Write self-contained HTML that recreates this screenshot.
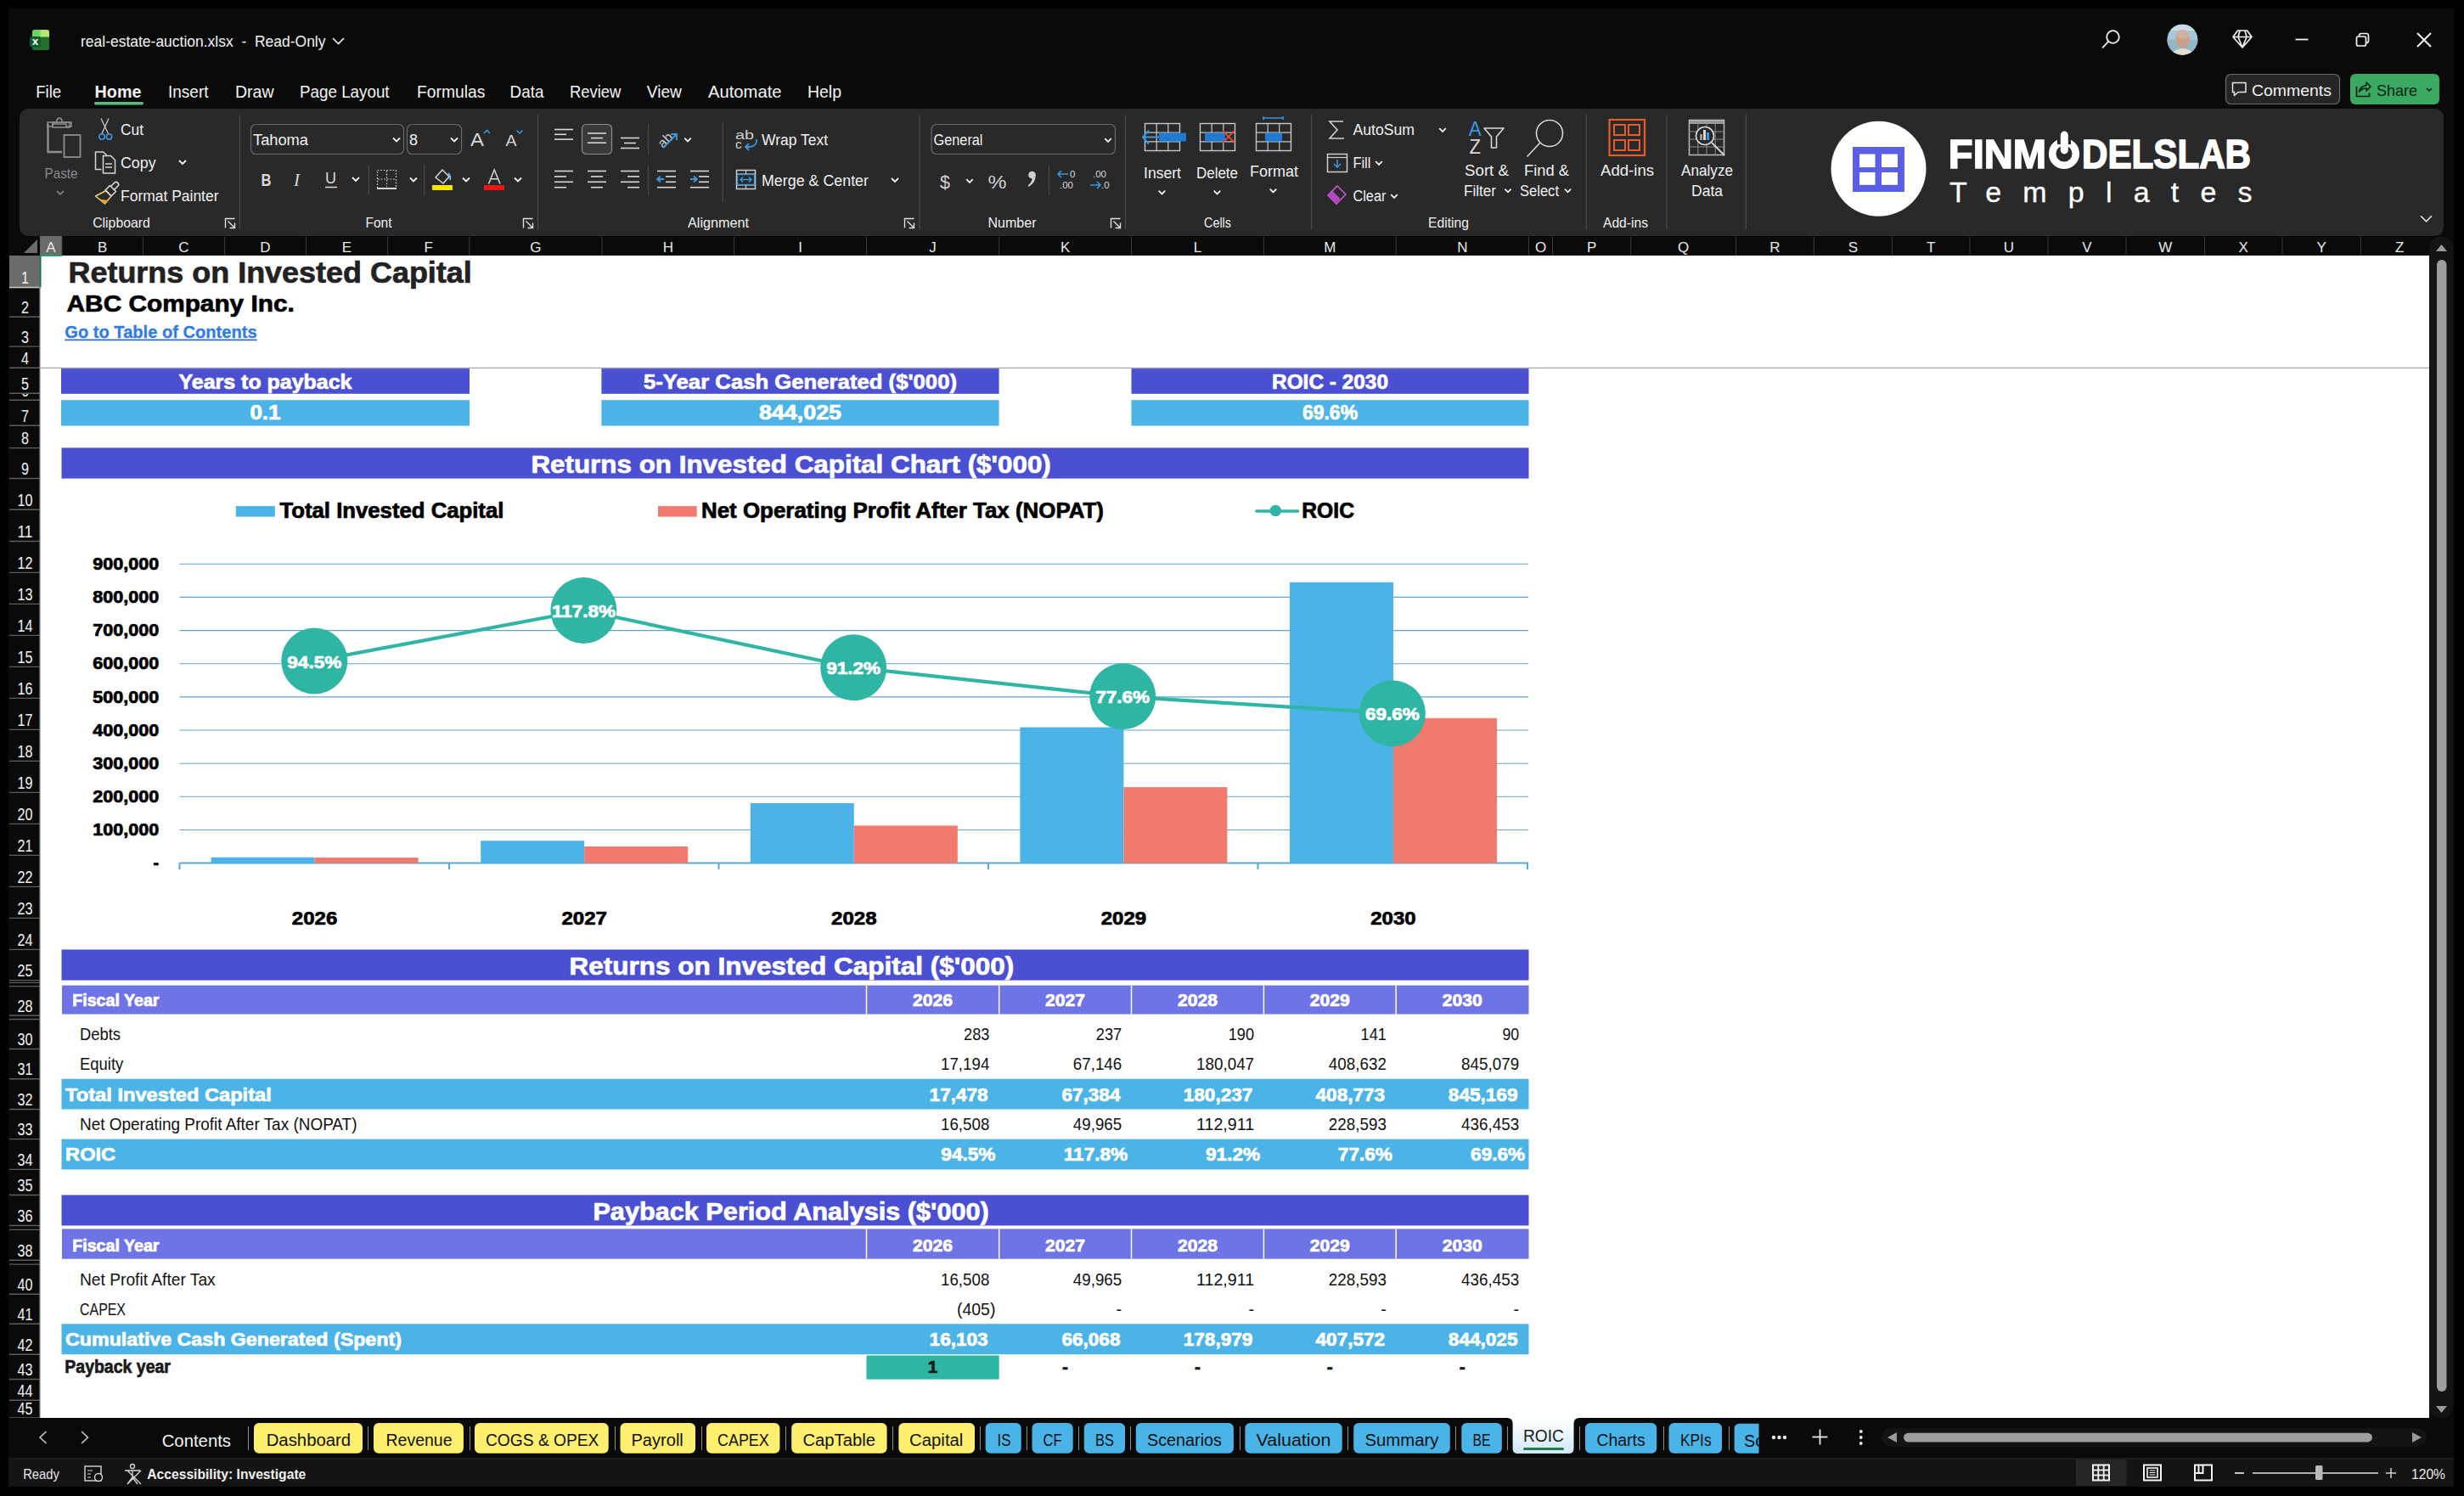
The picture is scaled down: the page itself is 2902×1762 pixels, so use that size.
<!DOCTYPE html>
<html><head><meta charset="utf-8"><title>real-estate-auction.xlsx - Excel</title>
<style>
html,body{margin:0;padding:0;background:#000;width:2902px;height:1762px;overflow:hidden;}
svg{display:block;font-family:"Liberation Sans", sans-serif;}
</style></head><body>
<svg width="2902" height="1762" viewBox="0 0 2902 1762">

<rect x="0.0" y="0.0" width="2902.0" height="1762.0" fill="#000"/>
<rect x="10.0" y="10.0" width="2880.0" height="1741.0" fill="#0a0a0a"/>
<rect x="47.0" y="301.0" width="2814.0" height="1369.0" fill="#ffffff"/>
<rect x="11.0" y="278.0" width="2850.0" height="23.0" fill="#0a0a0a"/>
<rect x="47.0" y="278.0" width="26.0" height="23.0" fill="#6b6b6b"/>
<text x="60.0" y="296.5" font-size="17" fill="#e8e8e8" text-anchor="middle">A</text>
<line x1="168.4" y1="279.0" x2="168.4" y2="301.0" stroke="#3c3c3c" stroke-width="1"/>
<text x="120.7" y="296.5" font-size="17" fill="#e8e8e8" text-anchor="middle">B</text>
<line x1="264.6" y1="279.0" x2="264.6" y2="301.0" stroke="#3c3c3c" stroke-width="1"/>
<text x="216.5" y="296.5" font-size="17" fill="#e8e8e8" text-anchor="middle">C</text>
<line x1="360.4" y1="279.0" x2="360.4" y2="301.0" stroke="#3c3c3c" stroke-width="1"/>
<text x="312.5" y="296.5" font-size="17" fill="#e8e8e8" text-anchor="middle">D</text>
<line x1="456.6" y1="279.0" x2="456.6" y2="301.0" stroke="#3c3c3c" stroke-width="1"/>
<text x="408.5" y="296.5" font-size="17" fill="#e8e8e8" text-anchor="middle">E</text>
<line x1="552.8" y1="279.0" x2="552.8" y2="301.0" stroke="#3c3c3c" stroke-width="1"/>
<text x="504.7" y="296.5" font-size="17" fill="#e8e8e8" text-anchor="middle">F</text>
<line x1="709.0" y1="279.0" x2="709.0" y2="301.0" stroke="#3c3c3c" stroke-width="1"/>
<text x="630.9" y="296.5" font-size="17" fill="#e8e8e8" text-anchor="middle">G</text>
<line x1="864.6" y1="279.0" x2="864.6" y2="301.0" stroke="#3c3c3c" stroke-width="1"/>
<text x="786.8" y="296.5" font-size="17" fill="#e8e8e8" text-anchor="middle">H</text>
<line x1="1020.5" y1="279.0" x2="1020.5" y2="301.0" stroke="#3c3c3c" stroke-width="1"/>
<text x="942.5" y="296.5" font-size="17" fill="#e8e8e8" text-anchor="middle">I</text>
<line x1="1176.7" y1="279.0" x2="1176.7" y2="301.0" stroke="#3c3c3c" stroke-width="1"/>
<text x="1098.6" y="296.5" font-size="17" fill="#e8e8e8" text-anchor="middle">J</text>
<line x1="1332.5" y1="279.0" x2="1332.5" y2="301.0" stroke="#3c3c3c" stroke-width="1"/>
<text x="1254.6" y="296.5" font-size="17" fill="#e8e8e8" text-anchor="middle">K</text>
<line x1="1488.4" y1="279.0" x2="1488.4" y2="301.0" stroke="#3c3c3c" stroke-width="1"/>
<text x="1410.5" y="296.5" font-size="17" fill="#e8e8e8" text-anchor="middle">L</text>
<line x1="1644.2" y1="279.0" x2="1644.2" y2="301.0" stroke="#3c3c3c" stroke-width="1"/>
<text x="1566.3" y="296.5" font-size="17" fill="#e8e8e8" text-anchor="middle">M</text>
<line x1="1800.5" y1="279.0" x2="1800.5" y2="301.0" stroke="#3c3c3c" stroke-width="1"/>
<text x="1722.3" y="296.5" font-size="17" fill="#e8e8e8" text-anchor="middle">N</text>
<line x1="1828.5" y1="279.0" x2="1828.5" y2="301.0" stroke="#3c3c3c" stroke-width="1"/>
<text x="1814.5" y="296.5" font-size="17" fill="#e8e8e8" text-anchor="middle">O</text>
<line x1="1920.7" y1="279.0" x2="1920.7" y2="301.0" stroke="#3c3c3c" stroke-width="1"/>
<text x="1874.6" y="296.5" font-size="17" fill="#e8e8e8" text-anchor="middle">P</text>
<line x1="2044.6" y1="279.0" x2="2044.6" y2="301.0" stroke="#3c3c3c" stroke-width="1"/>
<text x="1982.7" y="296.5" font-size="17" fill="#e8e8e8" text-anchor="middle">Q</text>
<line x1="2136.3" y1="279.0" x2="2136.3" y2="301.0" stroke="#3c3c3c" stroke-width="1"/>
<text x="2090.4" y="296.5" font-size="17" fill="#e8e8e8" text-anchor="middle">R</text>
<line x1="2228.4" y1="279.0" x2="2228.4" y2="301.0" stroke="#3c3c3c" stroke-width="1"/>
<text x="2182.4" y="296.5" font-size="17" fill="#e8e8e8" text-anchor="middle">S</text>
<line x1="2320.0" y1="279.0" x2="2320.0" y2="301.0" stroke="#3c3c3c" stroke-width="1"/>
<text x="2274.2" y="296.5" font-size="17" fill="#e8e8e8" text-anchor="middle">T</text>
<line x1="2412.0" y1="279.0" x2="2412.0" y2="301.0" stroke="#3c3c3c" stroke-width="1"/>
<text x="2366.0" y="296.5" font-size="17" fill="#e8e8e8" text-anchor="middle">U</text>
<line x1="2504.0" y1="279.0" x2="2504.0" y2="301.0" stroke="#3c3c3c" stroke-width="1"/>
<text x="2458.0" y="296.5" font-size="17" fill="#e8e8e8" text-anchor="middle">V</text>
<line x1="2596.5" y1="279.0" x2="2596.5" y2="301.0" stroke="#3c3c3c" stroke-width="1"/>
<text x="2550.2" y="296.5" font-size="17" fill="#e8e8e8" text-anchor="middle">W</text>
<line x1="2688.0" y1="279.0" x2="2688.0" y2="301.0" stroke="#3c3c3c" stroke-width="1"/>
<text x="2642.2" y="296.5" font-size="17" fill="#e8e8e8" text-anchor="middle">X</text>
<line x1="2780.3" y1="279.0" x2="2780.3" y2="301.0" stroke="#3c3c3c" stroke-width="1"/>
<text x="2734.2" y="296.5" font-size="17" fill="#e8e8e8" text-anchor="middle">Y</text>
<text x="2826.2" y="296.5" font-size="17" fill="#e8e8e8" text-anchor="middle">Z</text>
<line x1="73.0" y1="279.0" x2="73.0" y2="301.0" stroke="#3c3c3c" stroke-width="1"/>
<polygon points="44,282 44,298 28,298" fill="#6b6b6b"/>
<rect x="11.0" y="301.0" width="36.0" height="1369.0" fill="#0a0a0a"/>
<rect x="11.0" y="301.0" width="36.0" height="37.5" fill="#6b6b6b"/>
<line x1="11.0" y1="338.5" x2="47.0" y2="338.5" stroke="#5e5e5e" stroke-width="1.4"/>
<line x1="11.0" y1="373.3" x2="47.0" y2="373.3" stroke="#5e5e5e" stroke-width="1.4"/>
<line x1="11.0" y1="408.1" x2="47.0" y2="408.1" stroke="#5e5e5e" stroke-width="1.4"/>
<line x1="11.0" y1="433.3" x2="47.0" y2="433.3" stroke="#5e5e5e" stroke-width="1.4"/>
<line x1="11.0" y1="463.2" x2="47.0" y2="463.2" stroke="#5e5e5e" stroke-width="1.4"/>
<line x1="11.0" y1="471.2" x2="47.0" y2="471.2" stroke="#5e5e5e" stroke-width="1.4"/>
<line x1="11.0" y1="501.3" x2="47.0" y2="501.3" stroke="#5e5e5e" stroke-width="1.4"/>
<line x1="11.0" y1="527.6" x2="47.0" y2="527.6" stroke="#5e5e5e" stroke-width="1.4"/>
<line x1="11.0" y1="563.5" x2="47.0" y2="563.5" stroke="#5e5e5e" stroke-width="1.4"/>
<line x1="11.0" y1="600.3" x2="47.0" y2="600.3" stroke="#5e5e5e" stroke-width="1.4"/>
<line x1="11.0" y1="637.5" x2="47.0" y2="637.5" stroke="#5e5e5e" stroke-width="1.4"/>
<line x1="11.0" y1="674.4" x2="47.0" y2="674.4" stroke="#5e5e5e" stroke-width="1.4"/>
<line x1="11.0" y1="711.4" x2="47.0" y2="711.4" stroke="#5e5e5e" stroke-width="1.4"/>
<line x1="11.0" y1="748.4" x2="47.0" y2="748.4" stroke="#5e5e5e" stroke-width="1.4"/>
<line x1="11.0" y1="785.4" x2="47.0" y2="785.4" stroke="#5e5e5e" stroke-width="1.4"/>
<line x1="11.0" y1="822.4" x2="47.0" y2="822.4" stroke="#5e5e5e" stroke-width="1.4"/>
<line x1="11.0" y1="859.4" x2="47.0" y2="859.4" stroke="#5e5e5e" stroke-width="1.4"/>
<line x1="11.0" y1="896.4" x2="47.0" y2="896.4" stroke="#5e5e5e" stroke-width="1.4"/>
<line x1="11.0" y1="933.4" x2="47.0" y2="933.4" stroke="#5e5e5e" stroke-width="1.4"/>
<line x1="11.0" y1="970.4" x2="47.0" y2="970.4" stroke="#5e5e5e" stroke-width="1.4"/>
<line x1="11.0" y1="1007.4" x2="47.0" y2="1007.4" stroke="#5e5e5e" stroke-width="1.4"/>
<line x1="11.0" y1="1044.4" x2="47.0" y2="1044.4" stroke="#5e5e5e" stroke-width="1.4"/>
<line x1="11.0" y1="1081.4" x2="47.0" y2="1081.4" stroke="#5e5e5e" stroke-width="1.4"/>
<line x1="11.0" y1="1118.4" x2="47.0" y2="1118.4" stroke="#5e5e5e" stroke-width="1.4"/>
<line x1="11.0" y1="1154.6" x2="47.0" y2="1154.6" stroke="#5e5e5e" stroke-width="1.4"/>
<line x1="11.0" y1="1157.4" x2="47.0" y2="1157.4" stroke="#5e5e5e" stroke-width="1.4"/>
<line x1="11.0" y1="1161.6" x2="47.0" y2="1161.6" stroke="#5e5e5e" stroke-width="1.4"/>
<line x1="11.0" y1="1196.0" x2="47.0" y2="1196.0" stroke="#5e5e5e" stroke-width="1.4"/>
<line x1="11.0" y1="1200.5" x2="47.0" y2="1200.5" stroke="#5e5e5e" stroke-width="1.4"/>
<line x1="11.0" y1="1235.5" x2="47.0" y2="1235.5" stroke="#5e5e5e" stroke-width="1.4"/>
<line x1="11.0" y1="1270.7" x2="47.0" y2="1270.7" stroke="#5e5e5e" stroke-width="1.4"/>
<line x1="11.0" y1="1306.5" x2="47.0" y2="1306.5" stroke="#5e5e5e" stroke-width="1.4"/>
<line x1="11.0" y1="1341.6" x2="47.0" y2="1341.6" stroke="#5e5e5e" stroke-width="1.4"/>
<line x1="11.0" y1="1377.4" x2="47.0" y2="1377.4" stroke="#5e5e5e" stroke-width="1.4"/>
<line x1="11.0" y1="1407.5" x2="47.0" y2="1407.5" stroke="#5e5e5e" stroke-width="1.4"/>
<line x1="11.0" y1="1443.5" x2="47.0" y2="1443.5" stroke="#5e5e5e" stroke-width="1.4"/>
<line x1="11.0" y1="1448.4" x2="47.0" y2="1448.4" stroke="#5e5e5e" stroke-width="1.4"/>
<line x1="11.0" y1="1484.2" x2="47.0" y2="1484.2" stroke="#5e5e5e" stroke-width="1.4"/>
<line x1="11.0" y1="1489.1" x2="47.0" y2="1489.1" stroke="#5e5e5e" stroke-width="1.4"/>
<line x1="11.0" y1="1524.2" x2="47.0" y2="1524.2" stroke="#5e5e5e" stroke-width="1.4"/>
<line x1="11.0" y1="1559.3" x2="47.0" y2="1559.3" stroke="#5e5e5e" stroke-width="1.4"/>
<line x1="11.0" y1="1595.2" x2="47.0" y2="1595.2" stroke="#5e5e5e" stroke-width="1.4"/>
<line x1="11.0" y1="1624.5" x2="47.0" y2="1624.5" stroke="#5e5e5e" stroke-width="1.4"/>
<line x1="11.0" y1="1649.3" x2="47.0" y2="1649.3" stroke="#5e5e5e" stroke-width="1.4"/>
<line x1="11.0" y1="1670.0" x2="47.0" y2="1670.0" stroke="#5e5e5e" stroke-width="1.4"/>
<line x1="11.0" y1="338.5" x2="47.0" y2="338.5" stroke="#c8c8c8" stroke-width="1.6"/>
<text x="29.5" y="334.1" font-size="19.5" fill="#f2f2f2" text-anchor="middle" textLength="9.0" lengthAdjust="spacingAndGlyphs">1</text>
<text x="29.5" y="368.9" font-size="19.5" fill="#f2f2f2" text-anchor="middle" textLength="9.0" lengthAdjust="spacingAndGlyphs">2</text>
<text x="29.5" y="403.7" font-size="19.5" fill="#f2f2f2" text-anchor="middle" textLength="9.0" lengthAdjust="spacingAndGlyphs">3</text>
<text x="29.5" y="428.9" font-size="19.5" fill="#f2f2f2" text-anchor="middle" textLength="9.0" lengthAdjust="spacingAndGlyphs">4</text>
<text x="29.5" y="458.8" font-size="19.5" fill="#f2f2f2" text-anchor="middle" textLength="9.0" lengthAdjust="spacingAndGlyphs">5</text>
<text x="29.5" y="496.9" font-size="19.5" fill="#f2f2f2" text-anchor="middle" textLength="9.0" lengthAdjust="spacingAndGlyphs">7</text>
<text x="29.5" y="523.2" font-size="19.5" fill="#f2f2f2" text-anchor="middle" textLength="9.0" lengthAdjust="spacingAndGlyphs">8</text>
<text x="29.5" y="559.1" font-size="19.5" fill="#f2f2f2" text-anchor="middle" textLength="9.0" lengthAdjust="spacingAndGlyphs">9</text>
<text x="29.5" y="595.9" font-size="19.5" fill="#f2f2f2" text-anchor="middle" textLength="18.0" lengthAdjust="spacingAndGlyphs">10</text>
<text x="29.5" y="633.1" font-size="19.5" fill="#f2f2f2" text-anchor="middle" textLength="18.0" lengthAdjust="spacingAndGlyphs">11</text>
<text x="29.5" y="670.0" font-size="19.5" fill="#f2f2f2" text-anchor="middle" textLength="18.0" lengthAdjust="spacingAndGlyphs">12</text>
<text x="29.5" y="707.0" font-size="19.5" fill="#f2f2f2" text-anchor="middle" textLength="18.0" lengthAdjust="spacingAndGlyphs">13</text>
<text x="29.5" y="744.0" font-size="19.5" fill="#f2f2f2" text-anchor="middle" textLength="18.0" lengthAdjust="spacingAndGlyphs">14</text>
<text x="29.5" y="781.0" font-size="19.5" fill="#f2f2f2" text-anchor="middle" textLength="18.0" lengthAdjust="spacingAndGlyphs">15</text>
<text x="29.5" y="818.0" font-size="19.5" fill="#f2f2f2" text-anchor="middle" textLength="18.0" lengthAdjust="spacingAndGlyphs">16</text>
<text x="29.5" y="855.0" font-size="19.5" fill="#f2f2f2" text-anchor="middle" textLength="18.0" lengthAdjust="spacingAndGlyphs">17</text>
<text x="29.5" y="892.0" font-size="19.5" fill="#f2f2f2" text-anchor="middle" textLength="18.0" lengthAdjust="spacingAndGlyphs">18</text>
<text x="29.5" y="929.0" font-size="19.5" fill="#f2f2f2" text-anchor="middle" textLength="18.0" lengthAdjust="spacingAndGlyphs">19</text>
<text x="29.5" y="966.0" font-size="19.5" fill="#f2f2f2" text-anchor="middle" textLength="18.0" lengthAdjust="spacingAndGlyphs">20</text>
<text x="29.5" y="1003.0" font-size="19.5" fill="#f2f2f2" text-anchor="middle" textLength="18.0" lengthAdjust="spacingAndGlyphs">21</text>
<text x="29.5" y="1040.0" font-size="19.5" fill="#f2f2f2" text-anchor="middle" textLength="18.0" lengthAdjust="spacingAndGlyphs">22</text>
<text x="29.5" y="1077.0" font-size="19.5" fill="#f2f2f2" text-anchor="middle" textLength="18.0" lengthAdjust="spacingAndGlyphs">23</text>
<text x="29.5" y="1114.0" font-size="19.5" fill="#f2f2f2" text-anchor="middle" textLength="18.0" lengthAdjust="spacingAndGlyphs">24</text>
<text x="29.5" y="1150.2" font-size="19.5" fill="#f2f2f2" text-anchor="middle" textLength="18.0" lengthAdjust="spacingAndGlyphs">25</text>
<text x="29.5" y="1191.6" font-size="19.5" fill="#f2f2f2" text-anchor="middle" textLength="18.0" lengthAdjust="spacingAndGlyphs">28</text>
<text x="29.5" y="1231.1" font-size="19.5" fill="#f2f2f2" text-anchor="middle" textLength="18.0" lengthAdjust="spacingAndGlyphs">30</text>
<text x="29.5" y="1266.3" font-size="19.5" fill="#f2f2f2" text-anchor="middle" textLength="18.0" lengthAdjust="spacingAndGlyphs">31</text>
<text x="29.5" y="1302.1" font-size="19.5" fill="#f2f2f2" text-anchor="middle" textLength="18.0" lengthAdjust="spacingAndGlyphs">32</text>
<text x="29.5" y="1337.2" font-size="19.5" fill="#f2f2f2" text-anchor="middle" textLength="18.0" lengthAdjust="spacingAndGlyphs">33</text>
<text x="29.5" y="1373.0" font-size="19.5" fill="#f2f2f2" text-anchor="middle" textLength="18.0" lengthAdjust="spacingAndGlyphs">34</text>
<text x="29.5" y="1403.1" font-size="19.5" fill="#f2f2f2" text-anchor="middle" textLength="18.0" lengthAdjust="spacingAndGlyphs">35</text>
<text x="29.5" y="1439.1" font-size="19.5" fill="#f2f2f2" text-anchor="middle" textLength="18.0" lengthAdjust="spacingAndGlyphs">36</text>
<text x="29.5" y="1479.8" font-size="19.5" fill="#f2f2f2" text-anchor="middle" textLength="18.0" lengthAdjust="spacingAndGlyphs">38</text>
<text x="29.5" y="1519.8" font-size="19.5" fill="#f2f2f2" text-anchor="middle" textLength="18.0" lengthAdjust="spacingAndGlyphs">40</text>
<text x="29.5" y="1554.9" font-size="19.5" fill="#f2f2f2" text-anchor="middle" textLength="18.0" lengthAdjust="spacingAndGlyphs">41</text>
<text x="29.5" y="1590.8" font-size="19.5" fill="#f2f2f2" text-anchor="middle" textLength="18.0" lengthAdjust="spacingAndGlyphs">42</text>
<text x="29.5" y="1620.1" font-size="19.5" fill="#f2f2f2" text-anchor="middle" textLength="18.0" lengthAdjust="spacingAndGlyphs">43</text>
<text x="29.5" y="1644.9" font-size="19.5" fill="#f2f2f2" text-anchor="middle" textLength="18.0" lengthAdjust="spacingAndGlyphs">44</text>
<text x="29.5" y="1665.6" font-size="19.5" fill="#f2f2f2" text-anchor="middle" textLength="18.0" lengthAdjust="spacingAndGlyphs">45</text>
<line x1="47.0" y1="301.0" x2="47.0" y2="1670.0" stroke="#8a8a8a" stroke-width="1.2"/>
<clipPath id="r6"><rect x="11" y="464" width="36" height="6.5"/></clipPath>
<g clip-path="url(#r6)">
<text x="29.5" y="466.8" font-size="19.5" fill="#f2f2f2" text-anchor="middle" textLength="9.0" lengthAdjust="spacingAndGlyphs">6</text>
</g>
<line x1="47.0" y1="301.0" x2="73.0" y2="301.0" stroke="#21a366" stroke-width="2"/>
<line x1="47.5" y1="301.0" x2="47.5" y2="338.5" stroke="#1e7145" stroke-width="2"/>
<line x1="47.0" y1="433.4" x2="2861.0" y2="433.4" stroke="#a6a6a6" stroke-width="1.2"/>
<text x="80.5" y="333.3" font-size="34.9" fill="#222222" font-weight="bold" stroke="#222222" stroke-width="0.7" textLength="475.3" lengthAdjust="spacingAndGlyphs">Returns on Invested Capital</text>
<text x="78.6" y="366.8" font-size="27.2" fill="#000000" font-weight="bold" stroke="#000000" stroke-width="0.7" textLength="268.2" lengthAdjust="spacingAndGlyphs">ABC Company Inc.</text>
<text x="76.3" y="398.2" font-size="20.4" fill="#2f7ce6" font-weight="bold" textLength="226.3" lengthAdjust="spacingAndGlyphs" stroke="#2f7ce6" stroke-width="0.3">Go to Table of Contents</text>
<line x1="76.3" y1="400.3" x2="302.6" y2="400.3" stroke="#3a6cc6" stroke-width="1.8"/>
<rect x="72.0" y="434.1" width="481.0" height="29.7" fill="#4b4fd1"/>
<rect x="72.0" y="471.2" width="481.0" height="30.3" fill="#4cb3e6"/>
<text x="312.5" y="457.7" font-size="24.4" fill="#ffffff" font-weight="bold" stroke="#ffffff" stroke-width="0.7" text-anchor="middle" textLength="204.0" lengthAdjust="spacingAndGlyphs">Years to payback</text>
<text x="312.5" y="494.2" font-size="23.0" fill="#ffffff" font-weight="bold" stroke="#ffffff" stroke-width="0.7" text-anchor="middle" textLength="36.2" lengthAdjust="spacingAndGlyphs">0.1</text>
<rect x="708.4" y="434.1" width="468.2" height="29.7" fill="#4b4fd1"/>
<rect x="708.4" y="471.2" width="468.2" height="30.3" fill="#4cb3e6"/>
<text x="942.5" y="457.7" font-size="24.4" fill="#ffffff" font-weight="bold" stroke="#ffffff" stroke-width="0.7" text-anchor="middle" textLength="369.0" lengthAdjust="spacingAndGlyphs">5-Year Cash Generated ($'000)</text>
<text x="942.5" y="494.2" font-size="23.0" fill="#ffffff" font-weight="bold" stroke="#ffffff" stroke-width="0.7" text-anchor="middle" textLength="97.0" lengthAdjust="spacingAndGlyphs">844,025</text>
<rect x="1332.5" y="434.1" width="468.0" height="29.7" fill="#4b4fd1"/>
<rect x="1332.5" y="471.2" width="468.0" height="30.3" fill="#4cb3e6"/>
<text x="1566.5" y="457.7" font-size="24.4" fill="#ffffff" font-weight="bold" stroke="#ffffff" stroke-width="0.7" text-anchor="middle">ROIC - 2030</text>
<text x="1566.5" y="494.2" font-size="23.0" fill="#ffffff" font-weight="bold" stroke="#ffffff" stroke-width="0.7" text-anchor="middle">69.6%</text>
<rect x="72.5" y="527.4" width="1728.0" height="36.2" fill="#4b4fd1"/>
<text x="931.6" y="557.0" font-size="28.6" fill="#ffffff" font-weight="bold" stroke="#ffffff" stroke-width="0.7" text-anchor="middle" textLength="612.4" lengthAdjust="spacingAndGlyphs">Returns on Invested Capital Chart ($'000)</text>
<line x1="211.5" y1="977.5" x2="1800.0" y2="977.5" stroke="#62a2d0" stroke-width="1.1"/>
<text x="187.2" y="984.1" font-size="19.8" fill="#000000" font-weight="bold" stroke="#000000" stroke-width="0.7" text-anchor="end" textLength="77.9" lengthAdjust="spacingAndGlyphs">100,000</text>
<line x1="211.5" y1="938.3" x2="1800.0" y2="938.3" stroke="#62a2d0" stroke-width="1.1"/>
<text x="187.2" y="944.9" font-size="19.8" fill="#000000" font-weight="bold" stroke="#000000" stroke-width="0.7" text-anchor="end" textLength="77.9" lengthAdjust="spacingAndGlyphs">200,000</text>
<line x1="211.5" y1="899.2" x2="1800.0" y2="899.2" stroke="#62a2d0" stroke-width="1.1"/>
<text x="187.2" y="905.8" font-size="19.8" fill="#000000" font-weight="bold" stroke="#000000" stroke-width="0.7" text-anchor="end" textLength="77.9" lengthAdjust="spacingAndGlyphs">300,000</text>
<line x1="211.5" y1="860.0" x2="1800.0" y2="860.0" stroke="#62a2d0" stroke-width="1.1"/>
<text x="187.2" y="866.6" font-size="19.8" fill="#000000" font-weight="bold" stroke="#000000" stroke-width="0.7" text-anchor="end" textLength="77.9" lengthAdjust="spacingAndGlyphs">400,000</text>
<line x1="211.5" y1="820.9" x2="1800.0" y2="820.9" stroke="#62a2d0" stroke-width="1.1"/>
<text x="187.2" y="827.5" font-size="19.8" fill="#000000" font-weight="bold" stroke="#000000" stroke-width="0.7" text-anchor="end" textLength="77.9" lengthAdjust="spacingAndGlyphs">500,000</text>
<line x1="211.5" y1="781.7" x2="1800.0" y2="781.7" stroke="#62a2d0" stroke-width="1.1"/>
<text x="187.2" y="788.3" font-size="19.8" fill="#000000" font-weight="bold" stroke="#000000" stroke-width="0.7" text-anchor="end" textLength="77.9" lengthAdjust="spacingAndGlyphs">600,000</text>
<line x1="211.5" y1="742.6" x2="1800.0" y2="742.6" stroke="#62a2d0" stroke-width="1.1"/>
<text x="187.2" y="749.2" font-size="19.8" fill="#000000" font-weight="bold" stroke="#000000" stroke-width="0.7" text-anchor="end" textLength="77.9" lengthAdjust="spacingAndGlyphs">700,000</text>
<line x1="211.5" y1="703.4" x2="1800.0" y2="703.4" stroke="#62a2d0" stroke-width="1.1"/>
<text x="187.2" y="710.0" font-size="19.8" fill="#000000" font-weight="bold" stroke="#000000" stroke-width="0.7" text-anchor="end" textLength="77.9" lengthAdjust="spacingAndGlyphs">800,000</text>
<line x1="211.5" y1="664.3" x2="1800.0" y2="664.3" stroke="#62a2d0" stroke-width="1.1"/>
<text x="187.2" y="670.9" font-size="19.8" fill="#000000" font-weight="bold" stroke="#000000" stroke-width="0.7" text-anchor="end" textLength="77.9" lengthAdjust="spacingAndGlyphs">900,000</text>
<text x="187.2" y="1023.2" font-size="19.8" fill="#000000" font-weight="bold" stroke="#000000" stroke-width="0.7" text-anchor="end">-</text>
<line x1="211.5" y1="1016.6" x2="1800.0" y2="1016.6" stroke="#5aa9d6" stroke-width="2"/>
<line x1="211.5" y1="1016.6" x2="211.5" y2="1024.0" stroke="#5aa9d6" stroke-width="2"/>
<line x1="529.0" y1="1016.6" x2="529.0" y2="1024.0" stroke="#5aa9d6" stroke-width="2"/>
<line x1="846.5" y1="1016.6" x2="846.5" y2="1024.0" stroke="#5aa9d6" stroke-width="2"/>
<line x1="1164.0" y1="1016.6" x2="1164.0" y2="1024.0" stroke="#5aa9d6" stroke-width="2"/>
<line x1="1481.5" y1="1016.6" x2="1481.5" y2="1024.0" stroke="#5aa9d6" stroke-width="2"/>
<line x1="1799.0" y1="1016.6" x2="1799.0" y2="1024.0" stroke="#5aa9d6" stroke-width="2"/>
<rect x="248.6" y="1009.8" width="122.0" height="6.8" fill="#4cb3e6"/>
<rect x="370.6" y="1010.1" width="122.0" height="6.5" fill="#f07a6e"/>
<text x="370.6" y="1088.8" font-size="22.1" fill="#000000" font-weight="bold" stroke="#000000" stroke-width="0.7" text-anchor="middle" textLength="53.5" lengthAdjust="spacingAndGlyphs">2026</text>
<rect x="566.2" y="990.2" width="122.0" height="26.4" fill="#4cb3e6"/>
<rect x="688.2" y="997.0" width="122.0" height="19.6" fill="#f07a6e"/>
<text x="688.2" y="1088.8" font-size="22.1" fill="#000000" font-weight="bold" stroke="#000000" stroke-width="0.7" text-anchor="middle" textLength="53.5" lengthAdjust="spacingAndGlyphs">2027</text>
<rect x="883.8" y="946.0" width="122.0" height="70.6" fill="#4cb3e6"/>
<rect x="1005.8" y="972.4" width="122.0" height="44.2" fill="#f07a6e"/>
<text x="1005.8" y="1088.8" font-size="22.1" fill="#000000" font-weight="bold" stroke="#000000" stroke-width="0.7" text-anchor="middle" textLength="53.5" lengthAdjust="spacingAndGlyphs">2028</text>
<rect x="1201.4" y="856.6" width="122.0" height="160.0" fill="#4cb3e6"/>
<rect x="1323.4" y="927.1" width="122.0" height="89.5" fill="#f07a6e"/>
<text x="1323.4" y="1088.8" font-size="22.1" fill="#000000" font-weight="bold" stroke="#000000" stroke-width="0.7" text-anchor="middle" textLength="53.5" lengthAdjust="spacingAndGlyphs">2029</text>
<rect x="1519.0" y="685.8" width="122.0" height="330.8" fill="#4cb3e6"/>
<rect x="1641.0" y="845.8" width="122.0" height="170.8" fill="#f07a6e"/>
<text x="1641.0" y="1088.8" font-size="22.1" fill="#000000" font-weight="bold" stroke="#000000" stroke-width="0.7" text-anchor="middle" textLength="53.5" lengthAdjust="spacingAndGlyphs">2030</text>
<polyline points="370.3,778.5 687.4,719.0 1005.2,786.3 1322.2,820.3 1639.9,840.2" fill="none" stroke="#2fb5a4" stroke-width="4.2" stroke-linejoin="round"/>
<circle cx="370.3" cy="778.5" r="39" fill="#2fb5a4"/>
<text x="370.3" y="786.5" font-size="19.8" fill="#ffffff" font-weight="bold" stroke="#ffffff" stroke-width="0.7" text-anchor="middle" textLength="64.0" lengthAdjust="spacingAndGlyphs">94.5%</text>
<circle cx="687.4" cy="719.0" r="39" fill="#2fb5a4"/>
<text x="687.4" y="727.0" font-size="19.8" fill="#ffffff" font-weight="bold" stroke="#ffffff" stroke-width="0.7" text-anchor="middle" textLength="75.0" lengthAdjust="spacingAndGlyphs">117.8%</text>
<circle cx="1005.2" cy="786.3" r="39" fill="#2fb5a4"/>
<text x="1005.2" y="794.3" font-size="19.8" fill="#ffffff" font-weight="bold" stroke="#ffffff" stroke-width="0.7" text-anchor="middle" textLength="64.0" lengthAdjust="spacingAndGlyphs">91.2%</text>
<circle cx="1322.2" cy="820.3" r="39" fill="#2fb5a4"/>
<text x="1322.2" y="828.3" font-size="19.8" fill="#ffffff" font-weight="bold" stroke="#ffffff" stroke-width="0.7" text-anchor="middle" textLength="64.0" lengthAdjust="spacingAndGlyphs">77.6%</text>
<circle cx="1639.9" cy="840.2" r="39" fill="#2fb5a4"/>
<text x="1639.9" y="848.2" font-size="19.8" fill="#ffffff" font-weight="bold" stroke="#ffffff" stroke-width="0.7" text-anchor="middle" textLength="64.0" lengthAdjust="spacingAndGlyphs">69.6%</text>
<rect x="277.8" y="596.1" width="46.0" height="12.5" fill="#4cb3e6"/>
<text x="329.5" y="609.8" font-size="24.9" fill="#000000" font-weight="bold" stroke="#000000" stroke-width="0.7" textLength="263.9" lengthAdjust="spacingAndGlyphs">Total Invested Capital</text>
<rect x="775.0" y="596.1" width="45.7" height="12.5" fill="#f07a6e"/>
<text x="826.0" y="609.8" font-size="24.9" fill="#000000" font-weight="bold" stroke="#000000" stroke-width="0.7" textLength="474.0" lengthAdjust="spacingAndGlyphs">Net Operating Profit After Tax (NOPAT)</text>
<line x1="1480.0" y1="602.0" x2="1528.5" y2="602.0" stroke="#2fb5a4" stroke-width="3.6" stroke-linecap="round"/>
<circle cx="1502.3" cy="601.5" r="6.8" fill="#2fb5a4"/>
<text x="1533.3" y="609.8" font-size="24.9" fill="#000000" font-weight="bold" stroke="#000000" stroke-width="0.7" textLength="61.7" lengthAdjust="spacingAndGlyphs">ROIC</text>
<rect x="72.5" y="1118.4" width="1728.0" height="36.2" fill="#4b4fd1"/>
<text x="932.4" y="1147.8" font-size="28.6" fill="#ffffff" font-weight="bold" stroke="#ffffff" stroke-width="0.7" text-anchor="middle" textLength="523.8" lengthAdjust="spacingAndGlyphs">Returns on Invested Capital ($'000)</text>
<rect x="73.0" y="1160.6" width="1727.5" height="33.9" fill="#6e73e6"/>
<text x="85.2" y="1185.4" font-size="19.8" fill="#ffffff" font-weight="bold" stroke="#ffffff" stroke-width="0.7" textLength="102.3" lengthAdjust="spacingAndGlyphs">Fiscal Year</text>
<line x1="1020.5" y1="1160.6" x2="1020.5" y2="1194.5" stroke="#ffffff" stroke-width="1.5"/>
<text x="1098.6" y="1185.4" font-size="20.4" fill="#ffffff" font-weight="bold" stroke="#ffffff" stroke-width="0.7" text-anchor="middle" textLength="47.0" lengthAdjust="spacingAndGlyphs">2026</text>
<line x1="1176.7" y1="1160.6" x2="1176.7" y2="1194.5" stroke="#ffffff" stroke-width="1.5"/>
<text x="1254.6" y="1185.4" font-size="20.4" fill="#ffffff" font-weight="bold" stroke="#ffffff" stroke-width="0.7" text-anchor="middle" textLength="47.0" lengthAdjust="spacingAndGlyphs">2027</text>
<line x1="1332.5" y1="1160.6" x2="1332.5" y2="1194.5" stroke="#ffffff" stroke-width="1.5"/>
<text x="1410.5" y="1185.4" font-size="20.4" fill="#ffffff" font-weight="bold" stroke="#ffffff" stroke-width="0.7" text-anchor="middle" textLength="47.0" lengthAdjust="spacingAndGlyphs">2028</text>
<line x1="1488.4" y1="1160.6" x2="1488.4" y2="1194.5" stroke="#ffffff" stroke-width="1.5"/>
<text x="1566.3" y="1185.4" font-size="20.4" fill="#ffffff" font-weight="bold" stroke="#ffffff" stroke-width="0.7" text-anchor="middle" textLength="47.0" lengthAdjust="spacingAndGlyphs">2029</text>
<line x1="1644.2" y1="1160.6" x2="1644.2" y2="1194.5" stroke="#ffffff" stroke-width="1.5"/>
<text x="1722.3" y="1185.4" font-size="20.4" fill="#ffffff" font-weight="bold" stroke="#ffffff" stroke-width="0.7" text-anchor="middle" textLength="47.0" lengthAdjust="spacingAndGlyphs">2030</text>
<text x="94.0" y="1225.0" font-size="19.8" fill="#111111" textLength="48.0" lengthAdjust="spacingAndGlyphs">Debts</text>
<text x="1165.4" y="1225.0" font-size="19.8" fill="#111111" text-anchor="end" textLength="30.4" lengthAdjust="spacingAndGlyphs">283</text>
<text x="1321.2" y="1225.0" font-size="19.8" fill="#111111" text-anchor="end" textLength="30.4" lengthAdjust="spacingAndGlyphs">237</text>
<text x="1477.1" y="1225.0" font-size="19.8" fill="#111111" text-anchor="end" textLength="30.4" lengthAdjust="spacingAndGlyphs">190</text>
<text x="1632.9" y="1225.0" font-size="19.8" fill="#111111" text-anchor="end" textLength="30.4" lengthAdjust="spacingAndGlyphs">141</text>
<text x="1789.2" y="1225.0" font-size="19.8" fill="#111111" text-anchor="end" textLength="19.8" lengthAdjust="spacingAndGlyphs">90</text>
<text x="94.0" y="1260.2" font-size="19.8" fill="#111111" textLength="51.3" lengthAdjust="spacingAndGlyphs">Equity</text>
<text x="1165.4" y="1260.2" font-size="19.8" fill="#111111" text-anchor="end" textLength="57.4" lengthAdjust="spacingAndGlyphs">17,194</text>
<text x="1321.2" y="1260.2" font-size="19.8" fill="#111111" text-anchor="end" textLength="57.4" lengthAdjust="spacingAndGlyphs">67,146</text>
<text x="1477.1" y="1260.2" font-size="19.8" fill="#111111" text-anchor="end" textLength="68.1" lengthAdjust="spacingAndGlyphs">180,047</text>
<text x="1632.9" y="1260.2" font-size="19.8" fill="#111111" text-anchor="end" textLength="68.1" lengthAdjust="spacingAndGlyphs">408,632</text>
<text x="1789.2" y="1260.2" font-size="19.8" fill="#111111" text-anchor="end" textLength="68.1" lengthAdjust="spacingAndGlyphs">845,079</text>
<rect x="72.5" y="1270.7" width="1728.0" height="35.8" fill="#4cb3e6"/>
<text x="77.1" y="1296.5" font-size="22.6" fill="#ffffff" font-weight="bold" stroke="#ffffff" stroke-width="0.7" textLength="242.7" lengthAdjust="spacingAndGlyphs">Total Invested Capital</text>
<text x="1163.7" y="1296.5" font-size="22.6" fill="#ffffff" font-weight="bold" stroke="#ffffff" stroke-width="0.7" text-anchor="end">17,478</text>
<text x="1319.5" y="1296.5" font-size="22.6" fill="#ffffff" font-weight="bold" stroke="#ffffff" stroke-width="0.7" text-anchor="end">67,384</text>
<text x="1475.4" y="1296.5" font-size="22.6" fill="#ffffff" font-weight="bold" stroke="#ffffff" stroke-width="0.7" text-anchor="end">180,237</text>
<text x="1631.2" y="1296.5" font-size="22.6" fill="#ffffff" font-weight="bold" stroke="#ffffff" stroke-width="0.7" text-anchor="end">408,773</text>
<text x="1787.5" y="1296.5" font-size="22.6" fill="#ffffff" font-weight="bold" stroke="#ffffff" stroke-width="0.7" text-anchor="end">845,169</text>
<text x="94.0" y="1331.1" font-size="19.8" fill="#111111" textLength="326.5" lengthAdjust="spacingAndGlyphs">Net Operating Profit After Tax (NOPAT)</text>
<text x="1165.4" y="1331.1" font-size="19.8" fill="#111111" text-anchor="end" textLength="57.4" lengthAdjust="spacingAndGlyphs">16,508</text>
<text x="1321.2" y="1331.1" font-size="19.8" fill="#111111" text-anchor="end" textLength="57.4" lengthAdjust="spacingAndGlyphs">49,965</text>
<text x="1477.1" y="1331.1" font-size="19.8" fill="#111111" text-anchor="end" textLength="68.1" lengthAdjust="spacingAndGlyphs">112,911</text>
<text x="1632.9" y="1331.1" font-size="19.8" fill="#111111" text-anchor="end" textLength="68.1" lengthAdjust="spacingAndGlyphs">228,593</text>
<text x="1789.2" y="1331.1" font-size="19.8" fill="#111111" text-anchor="end" textLength="68.1" lengthAdjust="spacingAndGlyphs">436,453</text>
<rect x="72.5" y="1341.6" width="1728.0" height="35.8" fill="#4cb3e6"/>
<text x="77.1" y="1367.4" font-size="22.6" fill="#ffffff" font-weight="bold" stroke="#ffffff" stroke-width="0.7" textLength="59.0" lengthAdjust="spacingAndGlyphs">ROIC</text>
<text x="1172.4" y="1367.4" font-size="22.6" fill="#ffffff" font-weight="bold" stroke="#ffffff" stroke-width="0.7" text-anchor="end">94.5%</text>
<text x="1328.2" y="1367.4" font-size="22.6" fill="#ffffff" font-weight="bold" stroke="#ffffff" stroke-width="0.7" text-anchor="end">117.8%</text>
<text x="1484.1" y="1367.4" font-size="22.6" fill="#ffffff" font-weight="bold" stroke="#ffffff" stroke-width="0.7" text-anchor="end">91.2%</text>
<text x="1639.9" y="1367.4" font-size="22.6" fill="#ffffff" font-weight="bold" stroke="#ffffff" stroke-width="0.7" text-anchor="end">77.6%</text>
<text x="1796.2" y="1367.4" font-size="22.6" fill="#ffffff" font-weight="bold" stroke="#ffffff" stroke-width="0.7" text-anchor="end">69.6%</text>
<rect x="72.5" y="1407.5" width="1728.0" height="36.0" fill="#4b4fd1"/>
<text x="931.6" y="1436.7" font-size="28.6" fill="#ffffff" font-weight="bold" stroke="#ffffff" stroke-width="0.7" text-anchor="middle" textLength="466.4" lengthAdjust="spacingAndGlyphs">Payback Period Analysis ($'000)</text>
<rect x="73.0" y="1447.4" width="1727.5" height="35.3" fill="#6e73e6"/>
<text x="85.2" y="1473.6" font-size="19.8" fill="#ffffff" font-weight="bold" stroke="#ffffff" stroke-width="0.7" textLength="102.3" lengthAdjust="spacingAndGlyphs">Fiscal Year</text>
<line x1="1020.5" y1="1447.4" x2="1020.5" y2="1482.7" stroke="#ffffff" stroke-width="1.5"/>
<text x="1098.6" y="1473.6" font-size="20.4" fill="#ffffff" font-weight="bold" stroke="#ffffff" stroke-width="0.7" text-anchor="middle" textLength="47.0" lengthAdjust="spacingAndGlyphs">2026</text>
<line x1="1176.7" y1="1447.4" x2="1176.7" y2="1482.7" stroke="#ffffff" stroke-width="1.5"/>
<text x="1254.6" y="1473.6" font-size="20.4" fill="#ffffff" font-weight="bold" stroke="#ffffff" stroke-width="0.7" text-anchor="middle" textLength="47.0" lengthAdjust="spacingAndGlyphs">2027</text>
<line x1="1332.5" y1="1447.4" x2="1332.5" y2="1482.7" stroke="#ffffff" stroke-width="1.5"/>
<text x="1410.5" y="1473.6" font-size="20.4" fill="#ffffff" font-weight="bold" stroke="#ffffff" stroke-width="0.7" text-anchor="middle" textLength="47.0" lengthAdjust="spacingAndGlyphs">2028</text>
<line x1="1488.4" y1="1447.4" x2="1488.4" y2="1482.7" stroke="#ffffff" stroke-width="1.5"/>
<text x="1566.3" y="1473.6" font-size="20.4" fill="#ffffff" font-weight="bold" stroke="#ffffff" stroke-width="0.7" text-anchor="middle" textLength="47.0" lengthAdjust="spacingAndGlyphs">2029</text>
<line x1="1644.2" y1="1447.4" x2="1644.2" y2="1482.7" stroke="#ffffff" stroke-width="1.5"/>
<text x="1722.3" y="1473.6" font-size="20.4" fill="#ffffff" font-weight="bold" stroke="#ffffff" stroke-width="0.7" text-anchor="middle" textLength="47.0" lengthAdjust="spacingAndGlyphs">2030</text>
<text x="94.0" y="1513.7" font-size="19.8" fill="#111111" textLength="159.7" lengthAdjust="spacingAndGlyphs">Net Profit After Tax</text>
<text x="1165.4" y="1513.7" font-size="19.8" fill="#111111" text-anchor="end" textLength="57.4" lengthAdjust="spacingAndGlyphs">16,508</text>
<text x="1321.2" y="1513.7" font-size="19.8" fill="#111111" text-anchor="end" textLength="57.4" lengthAdjust="spacingAndGlyphs">49,965</text>
<text x="1477.1" y="1513.7" font-size="19.8" fill="#111111" text-anchor="end" textLength="68.1" lengthAdjust="spacingAndGlyphs">112,911</text>
<text x="1632.9" y="1513.7" font-size="19.8" fill="#111111" text-anchor="end" textLength="68.1" lengthAdjust="spacingAndGlyphs">228,593</text>
<text x="1789.2" y="1513.7" font-size="19.8" fill="#111111" text-anchor="end" textLength="68.1" lengthAdjust="spacingAndGlyphs">436,453</text>
<text x="94.0" y="1549.0" font-size="19.8" fill="#111111" textLength="54.0" lengthAdjust="spacingAndGlyphs">CAPEX</text>
<text x="1172.4" y="1549.0" font-size="19.8" fill="#111111" text-anchor="end" textLength="45.4" lengthAdjust="spacingAndGlyphs">(405)</text>
<text x="1321.2" y="1549.0" font-size="19.8" fill="#111111" text-anchor="end">-</text>
<text x="1477.1" y="1549.0" font-size="19.8" fill="#111111" text-anchor="end">-</text>
<text x="1632.9" y="1549.0" font-size="19.8" fill="#111111" text-anchor="end">-</text>
<text x="1789.2" y="1549.0" font-size="19.8" fill="#111111" text-anchor="end">-</text>
<rect x="72.5" y="1559.3" width="1728.0" height="35.9" fill="#4cb3e6"/>
<text x="77.1" y="1585.2" font-size="22.6" fill="#ffffff" font-weight="bold" stroke="#ffffff" stroke-width="0.7" textLength="395.8" lengthAdjust="spacingAndGlyphs">Cumulative Cash Generated (Spent)</text>
<text x="1163.7" y="1585.2" font-size="22.6" fill="#ffffff" font-weight="bold" stroke="#ffffff" stroke-width="0.7" text-anchor="end">16,103</text>
<text x="1319.5" y="1585.2" font-size="22.6" fill="#ffffff" font-weight="bold" stroke="#ffffff" stroke-width="0.7" text-anchor="end">66,068</text>
<text x="1475.4" y="1585.2" font-size="22.6" fill="#ffffff" font-weight="bold" stroke="#ffffff" stroke-width="0.7" text-anchor="end">178,979</text>
<text x="1631.2" y="1585.2" font-size="22.6" fill="#ffffff" font-weight="bold" stroke="#ffffff" stroke-width="0.7" text-anchor="end">407,572</text>
<text x="1787.5" y="1585.2" font-size="22.6" fill="#ffffff" font-weight="bold" stroke="#ffffff" stroke-width="0.7" text-anchor="end">844,025</text>
<rect x="1020.5" y="1596.5" width="156.2" height="28.1" fill="#2fb5a4"/>
<text x="76.3" y="1617.1" font-size="22.6" fill="#1a1a1a" font-weight="bold" stroke="#1a1a1a" stroke-width="0.7" textLength="124.6" lengthAdjust="spacingAndGlyphs">Payback year</text>
<text x="1098.6" y="1617.3" font-size="20.9" fill="#1a1a1a" font-weight="bold" stroke="#1a1a1a" stroke-width="0.7" text-anchor="middle">1</text>
<text x="1254.6" y="1617.3" font-size="20.9" fill="#1a1a1a" font-weight="bold" stroke="#1a1a1a" stroke-width="0.7" text-anchor="middle">-</text>
<text x="1410.5" y="1617.3" font-size="20.9" fill="#1a1a1a" font-weight="bold" stroke="#1a1a1a" stroke-width="0.7" text-anchor="middle">-</text>
<text x="1566.3" y="1617.3" font-size="20.9" fill="#1a1a1a" font-weight="bold" stroke="#1a1a1a" stroke-width="0.7" text-anchor="middle">-</text>
<text x="1722.3" y="1617.3" font-size="20.9" fill="#1a1a1a" font-weight="bold" stroke="#1a1a1a" stroke-width="0.7" text-anchor="middle">-</text>
<rect x="38.0" y="35.0" width="20.0" height="24.0" fill="#23702e" rx="2.5"/>
<path d="M38 38 Q38 35 41 35 L48 35 L48 43.4 L38 43.4 Z" fill="#6cd35e"/>
<path d="M47.5 35 L55 35 Q58 35 58 38 L58 43.4 L47.5 43.4 Z" fill="#b9e66e"/>
<rect x="35.0" y="43.0" width="13.0" height="12.5" fill="#0e5a33" rx="2.5"/>
<text x="41.6" y="53.2" font-size="13.5" fill="#f4fff4" font-weight="bold" text-anchor="middle">x</text>
<text x="95" y="54.8" font-size="18.5" fill="#f2f2f2" xml:space="preserve" textLength="288.5" lengthAdjust="spacingAndGlyphs">real-estate-auction.xlsx  -  Read-Only</text>
<polyline points="392,45 398.5,51.5 405,45" fill="none" stroke="#f2f2f2" stroke-width="1.6"/>
<circle cx="2488.5" cy="43.5" r="7.3" fill="none" stroke="#f2f2f2" stroke-width="1.8"/>
<line x1="2483.2" y1="48.8" x2="2476.0" y2="56.5" stroke="#f2f2f2" stroke-width="1.8"/>
<defs><radialGradient id="av" cx="50%" cy="45%" r="55%"><stop offset="0" stop-color="#e6c3aa"/><stop offset="0.45" stop-color="#c9a58e"/><stop offset="0.7" stop-color="#8fb1c4"/><stop offset="1" stop-color="#6f93aa"/></radialGradient></defs>
<clipPath id="avc"><circle cx="2570.4" cy="46.7" r="18"/></clipPath>
<g clip-path="url(#avc)"><rect x="2550" y="28" width="42" height="40" fill="#a7c6d6"/><rect x="2550" y="28" width="42" height="8" fill="#c9dbe6"/><rect x="2550" y="47" width="42" height="20" fill="#8fb7c4"/><ellipse cx="2570.5" cy="46" rx="8.2" ry="11" fill="#c7a18a"/><ellipse cx="2570.5" cy="41" rx="7" ry="5" fill="#d2b09c"/><path d="M2556 68 Q2558 58 2570.5 57 Q2583 58 2585 68 Z" fill="#e3dccf"/></g>
<path d="M2635.5 36 L2646.5 36 L2652 43.5 L2641 56 L2630 43.5 Z M2630 43.5 L2652 43.5 M2638 36 L2636 43.5 L2641 56 L2646 43.5 L2644 36" fill="none" stroke="#f2f2f2" stroke-width="1.7" stroke-linejoin="round"/>
<line x1="2703.5" y1="46.5" x2="2718.5" y2="46.5" stroke="#f2f2f2" stroke-width="1.8"/>
<rect x="2775.5" y="43" width="11" height="11" rx="2" fill="none" stroke="#f2f2f2" stroke-width="1.7"/>
<path d="M2778.5 43 L2778.5 42 Q2778.5 39.5 2781 39.5 L2787 39.5 Q2789.5 39.5 2789.5 42 L2789.5 48 Q2789.5 50.5 2787 50.5 L2786.5 50.5" fill="none" stroke="#f2f2f2" stroke-width="1.7"/>
<line x1="2847.0" y1="39.0" x2="2863.0" y2="55.0" stroke="#f2f2f2" stroke-width="1.9"/>
<line x1="2863.0" y1="39.0" x2="2847.0" y2="55.0" stroke="#f2f2f2" stroke-width="1.9"/>
<text x="42.2" y="114.9" font-size="21" fill="#f4f4f4" textLength="30.0" lengthAdjust="spacingAndGlyphs">File</text>
<text x="111.6" y="114.9" font-size="21" fill="#f4f4f4" font-weight="bold" textLength="54.8" lengthAdjust="spacingAndGlyphs">Home</text>
<text x="198.0" y="114.9" font-size="21" fill="#f4f4f4" textLength="47.5" lengthAdjust="spacingAndGlyphs">Insert</text>
<text x="277.0" y="114.9" font-size="21" fill="#f4f4f4" textLength="45.6" lengthAdjust="spacingAndGlyphs">Draw</text>
<text x="353.0" y="114.9" font-size="21" fill="#f4f4f4" textLength="105.6" lengthAdjust="spacingAndGlyphs">Page Layout</text>
<text x="491.0" y="114.9" font-size="21" fill="#f4f4f4" textLength="80.4" lengthAdjust="spacingAndGlyphs">Formulas</text>
<text x="600.6" y="114.9" font-size="21" fill="#f4f4f4" textLength="39.8" lengthAdjust="spacingAndGlyphs">Data</text>
<text x="670.9" y="114.9" font-size="21" fill="#f4f4f4" textLength="60.4" lengthAdjust="spacingAndGlyphs">Review</text>
<text x="761.8" y="114.9" font-size="21" fill="#f4f4f4" textLength="41.0" lengthAdjust="spacingAndGlyphs">View</text>
<text x="834.0" y="114.9" font-size="21" fill="#f4f4f4" textLength="86.5" lengthAdjust="spacingAndGlyphs">Automate</text>
<text x="950.9" y="114.9" font-size="21" fill="#f4f4f4" textLength="40.1" lengthAdjust="spacingAndGlyphs">Help</text>
<rect x="111.0" y="120.0" width="58.0" height="3.5" fill="#5fb880" rx="1.7"/>
<rect x="2621.5" y="87.5" width="134" height="35" rx="6" fill="#262626" stroke="#6a6a6a" stroke-width="1.2"/>
<path d="M2629.5 97.5 h15.5 v11 h-9 l-4.5 4 v-4 h-2 z" fill="none" stroke="#e8e8e8" stroke-width="1.5" stroke-linejoin="round"/>
<text x="2652.0" y="113.0" font-size="19" fill="#f0f0f0" textLength="94.0" lengthAdjust="spacingAndGlyphs">Comments</text>
<rect x="2768.0" y="87.0" width="105.0" height="36.0" fill="#3aaa63" rx="6"/>
<path d="M2775.5 102 v11.5 h15 v-4" fill="none" stroke="#0a1f10" stroke-width="1.7"/>
<path d="M2778.5 108 Q2780 101.5 2787 100.5 v-3.5 l5 5 l-5 5 v-3.3 Q2782 104 2778.5 108 z" fill="none" stroke="#0a1f10" stroke-width="1.5" stroke-linejoin="round"/>
<text x="2799.0" y="113.0" font-size="19" fill="#0c2412" textLength="48.0" lengthAdjust="spacingAndGlyphs">Share</text>
<polyline points="2858,104 2861,107 2864,104" fill="none" stroke="#0c2412" stroke-width="1.5"/>
<rect x="23.0" y="128.0" width="2855.0" height="150.0" fill="#292929" rx="10"/>
<path d="M56 144 h11 v-3 q3 -4 6 0 v3 h11 v5 h-6 v-3 h-16 v3 h-6 z" fill="none" stroke="#8f8f8f" stroke-width="1.5"/>
<path d="M56.5 146 v33 h16.5" fill="none" stroke="#8f8f8f" stroke-width="2.4"/>
<rect x="75.5" y="159" width="19" height="26" fill="none" stroke="#8f8f8f" stroke-width="1.8"/>
<rect x="62" y="144" width="20" height="6" fill="none" stroke="#8f8f8f" stroke-width="1.5"/>
<text x="72.0" y="209.8" font-size="16.5" fill="#8c8c8c" text-anchor="middle" textLength="39.0" lengthAdjust="spacingAndGlyphs">Paste</text>
<polyline points="67.0,225.0 71.0,229.0 75.0,225.0" fill="none" stroke="#7a7a7a" stroke-width="1.8"/>
<path d="M119 139.5 L128 158.5 M128 139.5 L119.5 158.5" stroke="#d6d6d6" stroke-width="1.2" fill="none"/>
<circle cx="120" cy="161" r="3.2" fill="none" stroke="#3a96dd" stroke-width="1.6"/><circle cx="128.5" cy="161" r="3.2" fill="none" stroke="#3a96dd" stroke-width="1.6"/>
<text x="142.0" y="159.2" font-size="17.5" fill="#f0f0f0" textLength="27.0" lengthAdjust="spacingAndGlyphs">Cut</text>
<path d="M119.5 199.5 h-7 v-20.5 h9 l4.5 4" fill="none" stroke="#d6d6d6" stroke-width="1.5"/><path d="M121.5 183.5 h9 l5 5 v15.5 h-14 z M124 193 h8 M124 197 h8" fill="none" stroke="#d6d6d6" stroke-width="1.5"/>
<text x="142.0" y="197.8" font-size="17.5" fill="#f0f0f0" textLength="41.6" lengthAdjust="spacingAndGlyphs">Copy</text>
<polyline points="211.0,189.0 215.0,193.0 219.0,189.0" fill="none" stroke="#f0f0f0" stroke-width="1.8"/>
<path d="M112.5 231 L125 224.5 L131 231 L123.5 240 Z" fill="#2a2a2a" stroke="#f2cf7a" stroke-width="1.5" stroke-linejoin="round"/><path d="M117 234.5 L127.5 236 L123.5 240 Z" fill="#e8a030"/><path d="M124 224 L129.5 218.5 L136.5 225.5 L131 231 Z M130.5 219.5 L135 215 Q137 213.5 139 215.5 Q140.5 217.5 139 219 L134.5 223.5" fill="none" stroke="#d8d8d8" stroke-width="1.6" stroke-linejoin="round"/>
<text x="142.0" y="237.0" font-size="17.5" fill="#f0f0f0" textLength="115.5" lengthAdjust="spacingAndGlyphs">Format Painter</text>
<text x="143.0" y="267.5" font-size="16.5" fill="#f0f0f0" text-anchor="middle" textLength="67.6" lengthAdjust="spacingAndGlyphs">Clipboard</text>
<path d="M265.5 268.5 V257.5 H276.5 M268.5 260.5 L276.5 268.5 M276.5 262.5 V268.5 H270.5" fill="none" stroke="#e0e0e0" stroke-width="1.4"/>
<line x1="282.5" y1="135.0" x2="282.5" y2="270.0" stroke="#4a4a4a" stroke-width="1.2"/>
<rect x="295.5" y="146.5" width="180" height="35" rx="6" fill="#292929" stroke="#6a6a6a" stroke-width="1.2"/>
<text x="298.0" y="170.5" font-size="18" fill="#f0f0f0" textLength="65.0" lengthAdjust="spacingAndGlyphs">Tahoma</text>
<polyline points="463.0,162.5 467.0,166.5 471.0,162.5" fill="none" stroke="#f0f0f0" stroke-width="1.8"/>
<rect x="479.5" y="146.5" width="64" height="35" rx="6" fill="#292929" stroke="#6a6a6a" stroke-width="1.2"/>
<text x="482.0" y="170.5" font-size="18" fill="#f0f0f0">8</text>
<polyline points="531.0,162.5 535.0,166.5 539.0,162.5" fill="none" stroke="#f0f0f0" stroke-width="1.8"/>
<text x="554.0" y="171.5" font-size="22" fill="#d8d8d8" textLength="16.0" lengthAdjust="spacingAndGlyphs">A</text>
<polyline points="570,157 573.5,153.5 577,157" fill="none" stroke="#3a96dd" stroke-width="1.6"/>
<text x="595.5" y="171.5" font-size="18.5" fill="#d8d8d8" textLength="13.0" lengthAdjust="spacingAndGlyphs">A</text>
<polyline points="608.5,153.5 612,157 615.5,153.5" fill="none" stroke="#3a96dd" stroke-width="1.6"/>
<text x="307.5" y="218.5" font-size="21" fill="#d8d8d8" font-weight="bold" textLength="12.0" lengthAdjust="spacingAndGlyphs">B</text>
<text x="346.0" y="218.5" font-size="21" fill="#d8d8d8" font-style="italic" font-family="Liberation Serif">I</text>
<text x="383.0" y="215.5" font-size="18" fill="#d8d8d8" textLength="13.0" lengthAdjust="spacingAndGlyphs">U</text>
<line x1="383.0" y1="220.5" x2="397.0" y2="220.5" stroke="#d8d8d8" stroke-width="1.5"/>
<polyline points="415.0,209.0 419.0,213.0 423.0,209.0" fill="none" stroke="#f0f0f0" stroke-width="1.8"/>
<line x1="434.4" y1="194.0" x2="434.4" y2="230.0" stroke="#4a4a4a" stroke-width="1.2"/>
<rect x="444.5" y="200.5" width="22" height="21" fill="none" stroke="#c8c8c8" stroke-width="1.2" stroke-dasharray="1.8 1.8"/>
<line x1="444.0" y1="222.0" x2="467.0" y2="222.0" stroke="#e8e8e8" stroke-width="1.8"/>
<line x1="455.5" y1="201.0" x2="455.5" y2="220.0" stroke="#c8c8c8" stroke-width="1.2" stroke-dasharray="1.8 1.8"/>
<line x1="445.0" y1="211.0" x2="466.0" y2="211.0" stroke="#c8c8c8" stroke-width="1.2" stroke-dasharray="1.8 1.8"/>
<polyline points="483.0,209.5 487.0,213.5 491.0,209.5" fill="none" stroke="#f0f0f0" stroke-width="1.8"/>
<line x1="499.6" y1="194.0" x2="499.6" y2="230.0" stroke="#4a4a4a" stroke-width="1.2"/>
<path d="M513 209 l8 -9 l8 8 l-7 8 z" fill="none" stroke="#d8d8d8" stroke-width="1.5"/><path d="M528 204 q3 3 2 8" fill="none" stroke="#6fb6ea" stroke-width="2"/>
<rect x="509.0" y="218.0" width="24.0" height="6.0" fill="#f5e400"/>
<polyline points="545.0,209.5 549.0,213.5 553.0,209.5" fill="none" stroke="#f0f0f0" stroke-width="1.8"/>
<path d="M575.5 216.5 L582.2 200 L589 216.5 M577.9 210.8 H586.6" fill="none" stroke="#d8d8d8" stroke-width="1.5"/>
<rect x="570.0" y="218.0" width="24.0" height="6.0" fill="#e81616"/>
<polyline points="606.0,209.5 610.0,213.5 614.0,209.5" fill="none" stroke="#f0f0f0" stroke-width="1.8"/>
<text x="446.0" y="267.5" font-size="16.5" fill="#f0f0f0" text-anchor="middle" textLength="31.0" lengthAdjust="spacingAndGlyphs">Font</text>
<path d="M616.5 268.5 V257.5 H627.5 M619.5 260.5 L627.5 268.5 M627.5 262.5 V268.5 H621.5" fill="none" stroke="#e0e0e0" stroke-width="1.4"/>
<line x1="633.6" y1="135.0" x2="633.6" y2="270.0" stroke="#4a4a4a" stroke-width="1.2"/>
<line x1="653.0" y1="152.5" x2="675.0" y2="152.5" stroke="#d8d8d8" stroke-width="1.6"/>
<line x1="653.0" y1="158.3" x2="667.0" y2="158.3" stroke="#d8d8d8" stroke-width="1.6"/>
<line x1="653.0" y1="164.1" x2="675.0" y2="164.1" stroke="#d8d8d8" stroke-width="1.6"/>
<rect x="685.5" y="146.5" width="35" height="35" rx="5" fill="#3a3a3a" stroke="#8a8a8a" stroke-width="1.2"/>
<line x1="692.0" y1="157.0" x2="714.0" y2="157.0" stroke="#d8d8d8" stroke-width="1.6"/>
<line x1="696.0" y1="162.6" x2="710.0" y2="162.6" stroke="#d8d8d8" stroke-width="1.6"/>
<line x1="692.0" y1="168.2" x2="714.0" y2="168.2" stroke="#d8d8d8" stroke-width="1.6"/>
<line x1="731.0" y1="162.5" x2="753.0" y2="162.5" stroke="#d8d8d8" stroke-width="1.6"/>
<line x1="735.0" y1="168.5" x2="749.0" y2="168.5" stroke="#d8d8d8" stroke-width="1.6"/>
<line x1="731.0" y1="174.5" x2="753.0" y2="174.5" stroke="#d8d8d8" stroke-width="1.6"/>
<line x1="763.5" y1="146.0" x2="763.5" y2="182.0" stroke="#4a4a4a" stroke-width="1.2"/>
<text x="771.0" y="171.0" font-size="16" fill="#d0d0d0" transform="rotate(-45 781 161)">ab</text>
<path d="M781 174 L797 158 M790 158 h7 v7" fill="none" stroke="#3a96dd" stroke-width="1.8"/>
<polyline points="806.2,162.6 810.0,166.4 813.8,162.6" fill="none" stroke="#f0f0f0" stroke-width="1.8"/>
<line x1="851.2" y1="144.0" x2="851.2" y2="238.0" stroke="#4a4a4a" stroke-width="1.2"/>
<text x="866.0" y="163.5" font-size="15.5" fill="#d0d0d0" textLength="22.0" lengthAdjust="spacingAndGlyphs">ab</text>
<text x="866.0" y="175.0" font-size="15.5" fill="#d0d0d0">c</text>
<path d="M891 164 q1 8 -8 9 h-5 m4 -4 l-4 4 l4 4" fill="none" stroke="#3a96dd" stroke-width="1.8"/>
<text x="897.0" y="171.0" font-size="18" fill="#f0f0f0" textLength="78.0" lengthAdjust="spacingAndGlyphs">Wrap Text</text>
<line x1="653.0" y1="201.5" x2="675.0" y2="201.5" stroke="#d8d8d8" stroke-width="1.6"/>
<line x1="653.0" y1="207.9" x2="667.0" y2="207.9" stroke="#d8d8d8" stroke-width="1.6"/>
<line x1="653.0" y1="214.3" x2="675.0" y2="214.3" stroke="#d8d8d8" stroke-width="1.6"/>
<line x1="653.0" y1="220.7" x2="667.0" y2="220.7" stroke="#d8d8d8" stroke-width="1.6"/>
<line x1="692.0" y1="201.5" x2="714.0" y2="201.5" stroke="#d8d8d8" stroke-width="1.6"/>
<line x1="696.0" y1="207.9" x2="710.0" y2="207.9" stroke="#d8d8d8" stroke-width="1.6"/>
<line x1="692.0" y1="214.3" x2="714.0" y2="214.3" stroke="#d8d8d8" stroke-width="1.6"/>
<line x1="696.0" y1="220.7" x2="710.0" y2="220.7" stroke="#d8d8d8" stroke-width="1.6"/>
<line x1="731.0" y1="201.5" x2="753.0" y2="201.5" stroke="#d8d8d8" stroke-width="1.6"/>
<line x1="739.0" y1="207.9" x2="753.0" y2="207.9" stroke="#d8d8d8" stroke-width="1.6"/>
<line x1="731.0" y1="214.3" x2="753.0" y2="214.3" stroke="#d8d8d8" stroke-width="1.6"/>
<line x1="739.0" y1="220.7" x2="753.0" y2="220.7" stroke="#d8d8d8" stroke-width="1.6"/>
<line x1="763.5" y1="195.0" x2="763.5" y2="230.0" stroke="#4a4a4a" stroke-width="1.2"/>
<line x1="774.0" y1="201.5" x2="796.0" y2="201.5" stroke="#d8d8d8" stroke-width="1.6"/>
<line x1="784.0" y1="207.9" x2="796.0" y2="207.9" stroke="#d8d8d8" stroke-width="1.6"/>
<line x1="784.0" y1="214.3" x2="796.0" y2="214.3" stroke="#d8d8d8" stroke-width="1.6"/>
<line x1="774.0" y1="220.7" x2="796.0" y2="220.7" stroke="#d8d8d8" stroke-width="1.6"/>
<path d="M774 211 h8 m-4 -3.5 l-4 3.5 l4 3.5" fill="none" stroke="#3a96dd" stroke-width="1.8"/>
<line x1="813.0" y1="201.5" x2="835.0" y2="201.5" stroke="#d8d8d8" stroke-width="1.6"/>
<line x1="823.0" y1="207.9" x2="835.0" y2="207.9" stroke="#d8d8d8" stroke-width="1.6"/>
<line x1="823.0" y1="214.3" x2="835.0" y2="214.3" stroke="#d8d8d8" stroke-width="1.6"/>
<line x1="813.0" y1="220.7" x2="835.0" y2="220.7" stroke="#d8d8d8" stroke-width="1.6"/>
<path d="M813 211 h8 m-4 -3.5 l4 3.5 l-4 3.5" fill="none" stroke="#3a96dd" stroke-width="1.8"/>
<rect x="867.5" y="200.5" width="22" height="22" fill="none" stroke="#cfcfcf" stroke-width="1.5"/>
<line x1="867.5" y1="205.0" x2="889.5" y2="205.0" stroke="#cfcfcf" stroke-width="1.2"/>
<line x1="867.5" y1="218.0" x2="889.5" y2="218.0" stroke="#cfcfcf" stroke-width="1.2"/>
<line x1="878.5" y1="200.5" x2="878.5" y2="205.0" stroke="#cfcfcf" stroke-width="1.2"/>
<line x1="878.5" y1="218.0" x2="878.5" y2="222.5" stroke="#cfcfcf" stroke-width="1.2"/>
<rect x="868.5" y="205.5" width="20" height="12" fill="none" stroke="#3a96dd" stroke-width="1.4"/>
<path d="M872 211.5 h13 m-10 -3 l-3 3 l3 3 m7 -6 l3 3 l-3 3" fill="none" stroke="#3a96dd" stroke-width="1.5"/>
<text x="897.0" y="219.0" font-size="18" fill="#f0f0f0" textLength="126.0" lengthAdjust="spacingAndGlyphs">Merge &amp; Center</text>
<polyline points="1050.0,210.0 1054.0,214.0 1058.0,210.0" fill="none" stroke="#f0f0f0" stroke-width="1.8"/>
<text x="846.0" y="267.5" font-size="16.5" fill="#f0f0f0" text-anchor="middle" textLength="72.0" lengthAdjust="spacingAndGlyphs">Alignment</text>
<path d="M1065.5 268.5 V257.5 H1076.5 M1068.5 260.5 L1076.5 268.5 M1076.5 262.5 V268.5 H1070.5" fill="none" stroke="#e0e0e0" stroke-width="1.4"/>
<line x1="1083.0" y1="135.0" x2="1083.0" y2="270.0" stroke="#4a4a4a" stroke-width="1.2"/>
<rect x="1097" y="146.5" width="216.5" height="35" rx="6" fill="#292929" stroke="#6a6a6a" stroke-width="1.2"/>
<text x="1099.5" y="171.0" font-size="18" fill="#f0f0f0" textLength="58.0" lengthAdjust="spacingAndGlyphs">General</text>
<polyline points="1301.2,163.1 1305.0,166.9 1308.8,163.1" fill="none" stroke="#f0f0f0" stroke-width="1.8"/>
<text x="1113.0" y="222.0" font-size="22" fill="#d0d0d0" text-anchor="middle" textLength="12.0" lengthAdjust="spacingAndGlyphs">$</text>
<polyline points="1138.2,211.1 1142.0,214.9 1145.8,211.1" fill="none" stroke="#f0f0f0" stroke-width="1.8"/>
<text x="1174.5" y="222.0" font-size="22" fill="#d0d0d0" text-anchor="middle" textLength="22.0" lengthAdjust="spacingAndGlyphs">%</text>
<circle cx="1215.5" cy="206" r="4.3" fill="#d0d0d0"/><path d="M1219.6 206.5 Q1219.8 215.5 1211.5 220 L1210.8 218.3 Q1215.8 214.5 1215.6 209 Z" fill="#d0d0d0"/>
<line x1="1235.5" y1="195.0" x2="1235.5" y2="230.0" stroke="#4a4a4a" stroke-width="1.2"/>
<text x="1260.0" y="209.0" font-size="11.5" fill="#d8d8d8">0</text>
<text x="1248.0" y="222.0" font-size="11.5" fill="#d8d8d8">.00</text>
<path d="M1246 205 h12 m-8 -4 l-4 4 l4 4" fill="none" stroke="#3a96dd" stroke-width="1.6"/>
<text x="1287.0" y="209.0" font-size="11.5" fill="#d8d8d8">.00</text>
<text x="1297.0" y="222.0" font-size="11.5" fill="#d8d8d8">.0</text>
<path d="M1284 218 h12 m-4 -4 l4 4 l-4 4" fill="none" stroke="#3a96dd" stroke-width="1.6"/>
<text x="1192.0" y="267.5" font-size="16.5" fill="#f0f0f0" text-anchor="middle" textLength="57.0" lengthAdjust="spacingAndGlyphs">Number</text>
<path d="M1308.5 268.5 V257.5 H1319.5 M1311.5 260.5 L1319.5 268.5 M1319.5 262.5 V268.5 H1313.5" fill="none" stroke="#e0e0e0" stroke-width="1.4"/>
<line x1="1325.5" y1="135.0" x2="1325.5" y2="270.0" stroke="#4a4a4a" stroke-width="1.2"/>
<rect x="1348.5" y="145.5" width="41" height="32" fill="none" stroke="#c8c8c8" stroke-width="1.4"/>
<line x1="1362.2" y1="145.5" x2="1362.2" y2="177.5" stroke="#c8c8c8" stroke-width="1.2"/>
<line x1="1348.5" y1="156.2" x2="1389.5" y2="156.2" stroke="#c8c8c8" stroke-width="1.2"/>
<line x1="1375.8" y1="145.5" x2="1375.8" y2="177.5" stroke="#c8c8c8" stroke-width="1.2"/>
<line x1="1348.5" y1="166.8" x2="1389.5" y2="166.8" stroke="#c8c8c8" stroke-width="1.2"/>
<rect x="1365.0" y="156.5" width="32.0" height="10.0" fill="#1f7ad4"/>
<path d="M1365 161.5 h-19 m7 -8 l-7 8 l7 8" fill="none" stroke="#3a96dd" stroke-width="2"/>
<text x="1369.0" y="210.0" font-size="18" fill="#f0f0f0" text-anchor="middle" textLength="44.0" lengthAdjust="spacingAndGlyphs">Insert</text>
<polyline points="1364.7,224.6 1368.5,228.4 1372.3,224.6" fill="none" stroke="#f0f0f0" stroke-width="1.8"/>
<rect x="1413.5" y="145.5" width="41" height="32" fill="none" stroke="#c8c8c8" stroke-width="1.4"/>
<line x1="1427.2" y1="145.5" x2="1427.2" y2="177.5" stroke="#c8c8c8" stroke-width="1.2"/>
<line x1="1413.5" y1="156.2" x2="1454.5" y2="156.2" stroke="#c8c8c8" stroke-width="1.2"/>
<line x1="1440.8" y1="145.5" x2="1440.8" y2="177.5" stroke="#c8c8c8" stroke-width="1.2"/>
<line x1="1413.5" y1="166.8" x2="1454.5" y2="166.8" stroke="#c8c8c8" stroke-width="1.2"/>
<rect x="1419.0" y="156.5" width="24.0" height="10.0" fill="#1f7ad4"/>
<path d="M1440 154 l14 14 m0 -14 l-14 14" stroke="#e04a3c" stroke-width="1.8"/>
<text x="1433.5" y="210.0" font-size="18" fill="#f0f0f0" text-anchor="middle" textLength="49.0" lengthAdjust="spacingAndGlyphs">Delete</text>
<polyline points="1429.7,224.6 1433.5,228.4 1437.3,224.6" fill="none" stroke="#f0f0f0" stroke-width="1.8"/>
<rect x="1479.5" y="145.5" width="41" height="32" fill="none" stroke="#c8c8c8" stroke-width="1.4"/>
<line x1="1493.2" y1="145.5" x2="1493.2" y2="177.5" stroke="#c8c8c8" stroke-width="1.2"/>
<line x1="1479.5" y1="156.2" x2="1520.5" y2="156.2" stroke="#c8c8c8" stroke-width="1.2"/>
<line x1="1506.8" y1="145.5" x2="1506.8" y2="177.5" stroke="#c8c8c8" stroke-width="1.2"/>
<line x1="1479.5" y1="166.8" x2="1520.5" y2="166.8" stroke="#c8c8c8" stroke-width="1.2"/>
<rect x="1490.0" y="156.5" width="20.0" height="10.0" fill="#1f7ad4"/>
<path d="M1488 139 h23 m-23 -2 v4 m23 -4 v4" fill="none" stroke="#3a96dd" stroke-width="1.6"/>
<text x="1500.5" y="208.0" font-size="18" fill="#f0f0f0" text-anchor="middle" textLength="57.0" lengthAdjust="spacingAndGlyphs">Format</text>
<polyline points="1495.7,222.6 1499.5,226.4 1503.3,222.6" fill="none" stroke="#f0f0f0" stroke-width="1.8"/>
<text x="1434.0" y="267.5" font-size="16.5" fill="#f0f0f0" text-anchor="middle" textLength="32.0" lengthAdjust="spacingAndGlyphs">Cells</text>
<line x1="1544.6" y1="135.0" x2="1544.6" y2="270.0" stroke="#4a4a4a" stroke-width="1.2"/>
<path d="M1582 143 h-16 l9 10 l-9 10 h17" fill="none" stroke="#d0d0d0" stroke-width="1.6"/>
<text x="1593.4" y="159.0" font-size="18" fill="#f0f0f0" textLength="72.6" lengthAdjust="spacingAndGlyphs">AutoSum</text>
<polyline points="1695.2,151.1 1699.0,154.9 1702.8,151.1" fill="none" stroke="#f0f0f0" stroke-width="1.8"/>
<rect x="1563.5" y="181.5" width="23" height="21" fill="none" stroke="#cfcfcf" stroke-width="1.5"/>
<line x1="1563.5" y1="185.5" x2="1586.5" y2="185.5" stroke="#cfcfcf" stroke-width="1.2"/>
<path d="M1575 188 v9 m-4 -4 l4 4 l4 -4" fill="none" stroke="#3a96dd" stroke-width="1.6"/>
<text x="1593.4" y="198.0" font-size="18" fill="#f0f0f0" textLength="21.0" lengthAdjust="spacingAndGlyphs">Fill</text>
<polyline points="1620.2,190.1 1624.0,193.9 1627.8,190.1" fill="none" stroke="#f0f0f0" stroke-width="1.8"/>
<path d="M1575 219 l10 10 l-11 11 l-10 -10 z" fill="none" stroke="#c75ad1" stroke-width="1.6"/><path d="M1564.5 230 l5 -5 l10 10 l-5 5 z" fill="#b447c4"/>
<text x="1593.4" y="237.0" font-size="18" fill="#f0f0f0" textLength="39.0" lengthAdjust="spacingAndGlyphs">Clear</text>
<polyline points="1638.2,229.1 1642.0,232.9 1645.8,229.1" fill="none" stroke="#f0f0f0" stroke-width="1.8"/>
<text x="1729.8" y="159.5" font-size="23" fill="#3a96dd" textLength="15.0" lengthAdjust="spacingAndGlyphs">A</text>
<text x="1730.5" y="181.0" font-size="23" fill="#d8d8d8" textLength="13.5" lengthAdjust="spacingAndGlyphs">Z</text>
<path d="M1748 151 h23 l-8.5 10 v13 h-6 v-13 z" fill="none" stroke="#d8d8d8" stroke-width="1.6" stroke-linejoin="round"/>
<text x="1751.0" y="207.0" font-size="18" fill="#f0f0f0" text-anchor="middle" textLength="52.0" lengthAdjust="spacingAndGlyphs">Sort &amp;</text>
<text x="1724.0" y="231.0" font-size="18" fill="#f0f0f0" textLength="38.0" lengthAdjust="spacingAndGlyphs">Filter</text>
<polyline points="1772.4,222.7 1776.0,226.3 1779.6,222.7" fill="none" stroke="#f0f0f0" stroke-width="1.8"/>
<circle cx="1825" cy="157" r="15.5" fill="none" stroke="#d8d8d8" stroke-width="1.6"/>
<line x1="1814.0" y1="168.0" x2="1798.5" y2="184.5" stroke="#d8d8d8" stroke-width="1.6"/>
<text x="1821.5" y="207.0" font-size="18" fill="#f0f0f0" text-anchor="middle" textLength="53.0" lengthAdjust="spacingAndGlyphs">Find &amp;</text>
<text x="1790.0" y="231.0" font-size="18" fill="#f0f0f0" textLength="46.0" lengthAdjust="spacingAndGlyphs">Select</text>
<polyline points="1842.9,222.7 1846.5,226.3 1850.1,222.7" fill="none" stroke="#f0f0f0" stroke-width="1.8"/>
<text x="1706.0" y="267.5" font-size="16.5" fill="#f0f0f0" text-anchor="middle" textLength="48.0" lengthAdjust="spacingAndGlyphs">Editing</text>
<line x1="1868.4" y1="135.0" x2="1868.4" y2="270.0" stroke="#4a4a4a" stroke-width="1.2"/>
<rect x="1895.5" y="141" width="41.5" height="42" fill="none" stroke="#e35d2d" stroke-width="2.2"/>
<rect x="1901" y="147" width="13" height="12" fill="none" stroke="#e35d2d" stroke-width="2"/>
<rect x="1918" y="147" width="13" height="12" fill="none" stroke="#e35d2d" stroke-width="2"/>
<rect x="1901" y="165" width="13" height="12" fill="none" stroke="#e35d2d" stroke-width="2"/>
<rect x="1918" y="165" width="13" height="12" fill="none" stroke="#e35d2d" stroke-width="2"/>
<text x="1916.5" y="207.0" font-size="18" fill="#f0f0f0" text-anchor="middle" textLength="63.0" lengthAdjust="spacingAndGlyphs">Add-ins</text>
<text x="1914.5" y="267.5" font-size="16.5" fill="#f0f0f0" text-anchor="middle" textLength="53.0" lengthAdjust="spacingAndGlyphs">Add-ins</text>
<line x1="1963.0" y1="135.0" x2="1963.0" y2="270.0" stroke="#4a4a4a" stroke-width="1.2"/>
<rect x="1989.5" y="141.5" width="41" height="41" fill="none" stroke="#bdbdbd" stroke-width="1.5"/>
<rect x="1990.0" y="142.0" width="40.0" height="4.0" fill="#9a9a9a"/>
<line x1="1989.5" y1="155.0" x2="2030.5" y2="155.0" stroke="#8a8a8a" stroke-width="1"/>
<line x1="1999.8" y1="146.0" x2="1999.8" y2="182.5" stroke="#8a8a8a" stroke-width="1"/>
<line x1="1989.5" y1="164.0" x2="2030.5" y2="164.0" stroke="#8a8a8a" stroke-width="1"/>
<line x1="2010.0" y1="146.0" x2="2010.0" y2="182.5" stroke="#8a8a8a" stroke-width="1"/>
<line x1="1989.5" y1="173.0" x2="2030.5" y2="173.0" stroke="#8a8a8a" stroke-width="1"/>
<line x1="2020.2" y1="146.0" x2="2020.2" y2="182.5" stroke="#8a8a8a" stroke-width="1"/>
<circle cx="2008" cy="160" r="10.5" fill="#292929" stroke="#d8d8d8" stroke-width="1.6"/>
<rect x="2002.0" y="158.0" width="3.0" height="7.0" fill="#9a9a9a"/>
<rect x="2006.0" y="153.0" width="3.0" height="12.0" fill="#d8d8d8"/>
<rect x="2010.0" y="156.0" width="3.0" height="9.0" fill="#3a96dd"/>
<line x1="2016.0" y1="168.0" x2="2031.0" y2="183.0" stroke="#d8d8d8" stroke-width="1.8"/>
<text x="2010.5" y="207.0" font-size="18" fill="#f0f0f0" text-anchor="middle" textLength="61.0" lengthAdjust="spacingAndGlyphs">Analyze</text>
<text x="2010.5" y="231.0" font-size="18" fill="#f0f0f0" text-anchor="middle" textLength="37.0" lengthAdjust="spacingAndGlyphs">Data</text>
<line x1="2056.4" y1="135.0" x2="2056.4" y2="270.0" stroke="#4a4a4a" stroke-width="1.2"/>
<circle cx="2212.5" cy="198.8" r="56" fill="#ffffff"/>
<rect x="2182.0" y="173.0" width="61.0" height="53.0" fill="#5b5fe6"/>
<rect x="2190.0" y="181.5" width="18.5" height="15.5" fill="#ffffff"/>
<rect x="2216.0" y="181.5" width="19.0" height="15.5" fill="#ffffff"/>
<rect x="2190.0" y="203.0" width="18.5" height="14.8" fill="#ffffff"/>
<rect x="2216.0" y="203.0" width="19.0" height="14.8" fill="#ffffff"/>
<text x="2294.8" y="197.8" font-size="49" fill="#ffffff" font-weight="bold" textLength="115.4" lengthAdjust="spacingAndGlyphs" stroke="#ffffff" stroke-width="1.6">FINM</text>
<text x="2452.0" y="197.8" font-size="49" fill="#ffffff" font-weight="bold" textLength="199.0" lengthAdjust="spacingAndGlyphs" stroke="#ffffff" stroke-width="1.6">DELSLAB</text>
<circle cx="2431" cy="181" r="13.8" fill="none" stroke="#ffffff" stroke-width="8.6"/>
<text x="2296" y="237.9" font-size="34" fill="#ffffff" letter-spacing="25.2" stroke="#ffffff" stroke-width="0.3">Templates</text>
<rect x="2423" y="152" width="16" height="18" fill="#292929"/>
<rect x="2426.8" y="154.6" width="9" height="26.8" rx="4.5" fill="#ffffff"/>
<polyline points="2851.0,254.2 2857.5,260.8 2864.0,254.2" fill="none" stroke="#e0e0e0" stroke-width="1.6"/>
<rect x="2861.0" y="278.0" width="29.0" height="1392.0" fill="#0a0a0a"/>
<rect x="2861.0" y="279.0" width="28.0" height="1391.0" fill="#141414" rx="12"/>
<path d="M2869 296 L2875.5 288 L2882 296 Z" fill="#9a9a9a"/>
<rect x="2870.0" y="306.0" width="11.5" height="1333.0" fill="#9e9e9e" rx="5.7"/>
<path d="M2869 1656 L2875.5 1664 L2882 1656 Z" fill="#9a9a9a"/>
<rect x="10.0" y="1670.0" width="2880.0" height="48.0" fill="#0a0a0a"/>
<polyline points="54.5,1686 47,1693 54.5,1700" fill="none" stroke="#cfcfcf" stroke-width="1.5"/>
<polyline points="96,1686 103.5,1693 96,1700" fill="none" stroke="#cfcfcf" stroke-width="1.5"/>
<text x="190.7" y="1703.6" font-size="20" fill="#f4f4f4" textLength="81.3" lengthAdjust="spacingAndGlyphs">Contents</text>
<line x1="292.5" y1="1680.0" x2="292.5" y2="1708.0" stroke="#8a8a8a" stroke-width="1"/>
<line x1="433.5" y1="1680.0" x2="433.5" y2="1708.0" stroke="#8a8a8a" stroke-width="1"/>
<line x1="553.5" y1="1680.0" x2="553.5" y2="1708.0" stroke="#8a8a8a" stroke-width="1"/>
<line x1="724.5" y1="1680.0" x2="724.5" y2="1708.0" stroke="#8a8a8a" stroke-width="1"/>
<line x1="826.5" y1="1680.0" x2="826.5" y2="1708.0" stroke="#8a8a8a" stroke-width="1"/>
<line x1="925.5" y1="1680.0" x2="925.5" y2="1708.0" stroke="#8a8a8a" stroke-width="1"/>
<line x1="1051.5" y1="1680.0" x2="1051.5" y2="1708.0" stroke="#8a8a8a" stroke-width="1"/>
<line x1="1154.5" y1="1680.0" x2="1154.5" y2="1708.0" stroke="#8a8a8a" stroke-width="1"/>
<line x1="1209.5" y1="1680.0" x2="1209.5" y2="1708.0" stroke="#8a8a8a" stroke-width="1"/>
<line x1="1270.5" y1="1680.0" x2="1270.5" y2="1708.0" stroke="#8a8a8a" stroke-width="1"/>
<line x1="1331.5" y1="1680.0" x2="1331.5" y2="1708.0" stroke="#8a8a8a" stroke-width="1"/>
<line x1="1460.5" y1="1680.0" x2="1460.5" y2="1708.0" stroke="#8a8a8a" stroke-width="1"/>
<line x1="1587.5" y1="1680.0" x2="1587.5" y2="1708.0" stroke="#8a8a8a" stroke-width="1"/>
<line x1="1714.5" y1="1680.0" x2="1714.5" y2="1708.0" stroke="#8a8a8a" stroke-width="1"/>
<line x1="1775.5" y1="1680.0" x2="1775.5" y2="1708.0" stroke="#8a8a8a" stroke-width="1"/>
<line x1="1860.5" y1="1680.0" x2="1860.5" y2="1708.0" stroke="#8a8a8a" stroke-width="1"/>
<line x1="1959.5" y1="1680.0" x2="1959.5" y2="1708.0" stroke="#8a8a8a" stroke-width="1"/>
<line x1="2036.5" y1="1680.0" x2="2036.5" y2="1708.0" stroke="#8a8a8a" stroke-width="1"/>
<rect x="299.0" y="1676.0" width="128.0" height="35.7" fill="#ffef6e" rx="6"/>
<text x="313.7" y="1703.0" font-size="20.5" fill="#111111" textLength="99.5" lengthAdjust="spacingAndGlyphs">Dashboard</text>
<rect x="440.0" y="1676.0" width="105.9" height="35.7" fill="#ffef6e" rx="6"/>
<text x="454.5" y="1703.0" font-size="20.5" fill="#111111" textLength="78.0" lengthAdjust="spacingAndGlyphs">Revenue</text>
<rect x="559.0" y="1676.0" width="157.7" height="35.7" fill="#ffef6e" rx="6"/>
<text x="572.0" y="1703.0" font-size="20.5" fill="#111111" textLength="133.4" lengthAdjust="spacingAndGlyphs">COGS &amp; OPEX</text>
<rect x="730.5" y="1676.0" width="88.5" height="35.7" fill="#ffef6e" rx="6"/>
<text x="743.5" y="1703.0" font-size="20.5" fill="#111111" textLength="61.3" lengthAdjust="spacingAndGlyphs">Payroll</text>
<rect x="832.0" y="1676.0" width="86.4" height="35.7" fill="#ffef6e" rx="6"/>
<text x="845.0" y="1703.0" font-size="20.5" fill="#111111" textLength="60.8" lengthAdjust="spacingAndGlyphs">CAPEX</text>
<rect x="932.2" y="1676.0" width="112.4" height="35.7" fill="#ffef6e" rx="6"/>
<text x="945.5" y="1703.0" font-size="20.5" fill="#111111" textLength="85.5" lengthAdjust="spacingAndGlyphs">CapTable</text>
<rect x="1058.4" y="1676.0" width="89.6" height="35.7" fill="#ffef6e" rx="6"/>
<text x="1071.0" y="1703.0" font-size="20.5" fill="#111111" textLength="63.4" lengthAdjust="spacingAndGlyphs">Capital</text>
<rect x="1160.7" y="1676.0" width="42.0" height="35.7" fill="#4ab4e8" rx="6"/>
<text x="1174.6" y="1703.0" font-size="20.5" fill="#111111" textLength="16.0" lengthAdjust="spacingAndGlyphs">IS</text>
<rect x="1215.5" y="1676.0" width="48.2" height="35.7" fill="#4ab4e8" rx="6"/>
<text x="1228.5" y="1703.0" font-size="20.5" fill="#111111" textLength="22.0" lengthAdjust="spacingAndGlyphs">CF</text>
<rect x="1276.8" y="1676.0" width="48.2" height="35.7" fill="#4ab4e8" rx="6"/>
<text x="1290.0" y="1703.0" font-size="20.5" fill="#111111" textLength="22.0" lengthAdjust="spacingAndGlyphs">BS</text>
<rect x="1337.8" y="1676.0" width="115.1" height="35.7" fill="#4ab4e8" rx="6"/>
<text x="1351.0" y="1703.0" font-size="20.5" fill="#111111" textLength="88.0" lengthAdjust="spacingAndGlyphs">Scenarios</text>
<rect x="1466.4" y="1676.0" width="114.3" height="35.7" fill="#4ab4e8" rx="6"/>
<text x="1479.5" y="1703.0" font-size="20.5" fill="#111111" textLength="88.0" lengthAdjust="spacingAndGlyphs">Valuation</text>
<rect x="1594.2" y="1676.0" width="113.6" height="35.7" fill="#4ab4e8" rx="6"/>
<text x="1607.5" y="1703.0" font-size="20.5" fill="#111111" textLength="87.0" lengthAdjust="spacingAndGlyphs">Summary</text>
<rect x="1721.3" y="1676.0" width="47.5" height="35.7" fill="#4ab4e8" rx="6"/>
<text x="1734.5" y="1703.0" font-size="20.5" fill="#111111" textLength="21.0" lengthAdjust="spacingAndGlyphs">BE</text>
<rect x="1867.0" y="1676.0" width="84.2" height="35.7" fill="#4ab4e8" rx="6"/>
<text x="1880.5" y="1703.0" font-size="20.5" fill="#111111" textLength="57.2" lengthAdjust="spacingAndGlyphs">Charts</text>
<rect x="1965.5" y="1676.0" width="62.5" height="35.7" fill="#4ab4e8" rx="6"/>
<text x="1979.0" y="1703.0" font-size="20.5" fill="#111111" textLength="36.6" lengthAdjust="spacingAndGlyphs">KPIs</text>
<clipPath id="scc"><rect x="2042.4" y="1670" width="29.1" height="48"/></clipPath>
<g clip-path="url(#scc)">
<rect x="2042.4" y="1676.8" width="60.0" height="34.9" fill="#4ab4e8" rx="6"/>
<text x="2054.0" y="1703.6" font-size="20" fill="#111111" textLength="88.0" lengthAdjust="spacingAndGlyphs">Scenarios</text>
</g>
<defs><linearGradient id="tabg" x1="0" y1="0" x2="0" y2="1"><stop offset="0" stop-color="#ffffff"/><stop offset="0.3" stop-color="#f4f9fd"/><stop offset="1" stop-color="#cfe7f8"/></linearGradient></defs>
<path d="M1775 1670 Q1781.6 1670 1781.6 1677 V1706 Q1781.6 1712 1787.6 1712 H1847.5 Q1853.5 1712 1853.5 1706 V1677 Q1853.5 1670 1860 1670 Z" fill="url(#tabg)"/>
<text x="1794.0" y="1697.5" font-size="20" fill="#1a1a1a" textLength="47.9" lengthAdjust="spacingAndGlyphs">ROIC</text>
<rect x="1794.0" y="1705.0" width="48.0" height="3.0" fill="#1e7b45" rx="1.5"/>
<circle cx="2089.0" cy="1693" r="2.2" fill="#e8e8e8"/>
<circle cx="2095.5" cy="1693" r="2.2" fill="#e8e8e8"/>
<circle cx="2102.0" cy="1693" r="2.2" fill="#e8e8e8"/>
<line x1="2134.5" y1="1692.5" x2="2152.4" y2="1692.5" stroke="#e8e8e8" stroke-width="1.8"/>
<line x1="2143.5" y1="1683.5" x2="2143.5" y2="1701.5" stroke="#e8e8e8" stroke-width="1.8"/>
<circle cx="2191.8" cy="1686" r="1.9" fill="#e8e8e8"/>
<circle cx="2191.8" cy="1693" r="1.9" fill="#e8e8e8"/>
<circle cx="2191.8" cy="1700" r="1.9" fill="#e8e8e8"/>
<rect x="2216.0" y="1682.0" width="642.0" height="22.0" fill="#141414" rx="11"/>
<path d="M2234 1687 L2223 1693 L2234 1699 Z" fill="#9a9a9a"/>
<rect x="2242.0" y="1687.7" width="552.0" height="10.7" fill="#9e9e9e" rx="5.3"/>
<path d="M2841 1687 L2852 1693 L2841 1699 Z" fill="#9a9a9a"/>
<rect x="10.0" y="1718.0" width="2880.0" height="33.0" fill="#141414"/>
<line x1="10.0" y1="1718.0" x2="2890.0" y2="1718.0" stroke="#2a2a2a" stroke-width="1"/>
<text x="27.2" y="1741.7" font-size="17" fill="#e8e8e8" textLength="42.6" lengthAdjust="spacingAndGlyphs">Ready</text>
<rect x="100" y="1727" width="19" height="17" fill="none" stroke="#d8d8d8" stroke-width="1.4"/><path d="M103 1732 h6 M103 1736 h4 M103 1740 h4" stroke="#d8d8d8" stroke-width="1.2"/><circle cx="116" cy="1740" r="4.5" fill="#141414" stroke="#d8d8d8" stroke-width="1.4"/>
<circle cx="156" cy="1727" r="2.5" fill="none" stroke="#d8d8d8" stroke-width="1.3"/><path d="M147 1732 h18 M156 1732 v8 l-6 8 M156 1740 l6 8 M150 1748 l16 -16 M150 1732 l16 16" fill="none" stroke="#d8d8d8" stroke-width="1.3"/>
<text x="173.3" y="1741.7" font-size="17" fill="#f0f0f0" font-weight="bold" textLength="187.0" lengthAdjust="spacingAndGlyphs">Accessibility: Investigate</text>
<rect x="2445.0" y="1719.0" width="59.4" height="31.0" fill="#262626"/>
<rect x="2465" y="1725.5" width="19" height="18" fill="none" stroke="#f4f4f4" stroke-width="2"/>
<line x1="2471.3" y1="1725.5" x2="2471.3" y2="1743.5" stroke="#f4f4f4" stroke-width="1.8"/>
<line x1="2465.0" y1="1731.5" x2="2484.0" y2="1731.5" stroke="#f4f4f4" stroke-width="1.8"/>
<line x1="2477.7" y1="1725.5" x2="2477.7" y2="1743.5" stroke="#f4f4f4" stroke-width="1.8"/>
<line x1="2465.0" y1="1737.5" x2="2484.0" y2="1737.5" stroke="#f4f4f4" stroke-width="1.8"/>
<rect x="2525" y="1725.5" width="20" height="18" fill="none" stroke="#f4f4f4" stroke-width="2"/><rect x="2529" y="1729" width="12" height="11" fill="none" stroke="#f4f4f4" stroke-width="1.6"/><path d="M2531.5 1732 h7 M2531.5 1734.5 h7 M2531.5 1737 h7" stroke="#f4f4f4" stroke-width="1.1"/>
<path d="M2585 1725.5 h20 v18 h-20 z M2585 1735 h9.5 v-9.5 M2589.5 1725.5 v9.5" fill="none" stroke="#f4f4f4" stroke-width="2"/>
<line x1="2632.0" y1="1735.0" x2="2643.0" y2="1735.0" stroke="#d8d8d8" stroke-width="1.8"/>
<line x1="2653.0" y1="1735.0" x2="2801.0" y2="1735.0" stroke="#b0b0b0" stroke-width="2"/>
<rect x="2727.0" y="1726.0" width="8.5" height="17.0" fill="#b8b8b8" rx="1.5"/>
<line x1="2810.0" y1="1735.0" x2="2822.0" y2="1735.0" stroke="#d0d0d0" stroke-width="1.5"/>
<line x1="2816.0" y1="1729.0" x2="2816.0" y2="1741.0" stroke="#d0d0d0" stroke-width="1.5"/>
<text x="2840.0" y="1741.5" font-size="17" fill="#e8e8e8" textLength="40.0" lengthAdjust="spacingAndGlyphs">120%</text>
</svg></body></html>
